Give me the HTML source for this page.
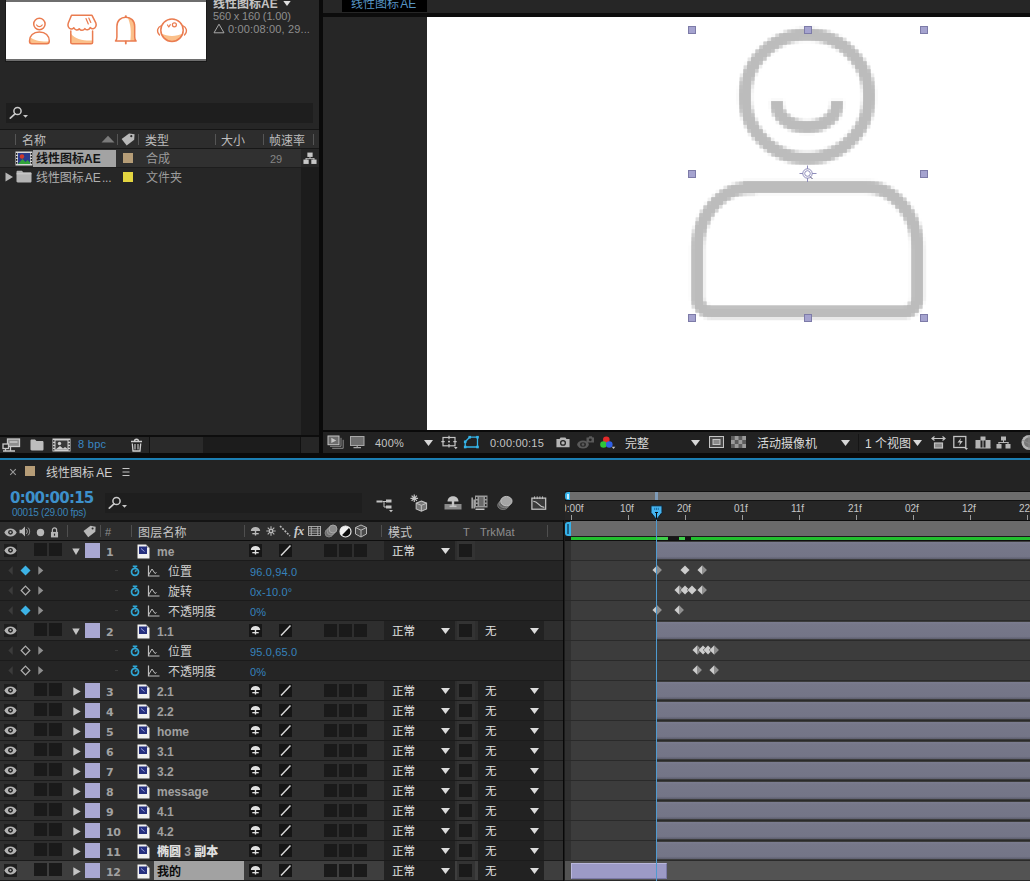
<!DOCTYPE html>
<html lang="zh"><head><meta charset="utf-8"><title>线性图标 AE</title><style>
html,body{margin:0;padding:0;background:#232323;}
body{width:1030px;height:881px;overflow:hidden;position:relative;font-family:"Liberation Sans","Noto Sans CJK SC",sans-serif;}
div,span,svg{position:absolute;display:block;box-sizing:border-box;}
span{white-space:nowrap;}
</style></head><body>
<div style="left:0px;top:0px;width:319px;height:455px;background:#262626;"></div>
<div style="left:5px;top:0px;width:202px;height:62px;background:#1a1a1a;"></div>
<div style="left:6px;top:0px;width:200px;height:2px;background:#6e6e6e;"></div>
<div style="left:6px;top:2px;width:200px;height:57px;background:#ffffff;"></div>
<div style="left:6px;top:59px;width:200px;height:2px;background:#6e6e6e;"></div>
<svg style="left:6px;top:2px" width="200" height="57" viewBox="0 0 200 57">
<g fill="#fbc08a" stroke="none">
<path d="M24 35c3.500 3.500 12 5 19.300 4.500-0.300 1.800-1.200 2.300-2.300 2.300h-15c-1.600 0-2.600-1-2.500-3.500z"/>
<path d="M64.800 31.500c4 5.500 13 7.500 21.800 7v2c0 0.800-0.600 1.200-1.500 1.200h-18.800c-0.900 0-1.500-0.400-1.500-1.200z"/>
<path d="M121.500 15.300c5 0.800 7.200 4 7.200 9.200v10.500c0 2 0.400 3 1.400 4h-5.800c1-8 0.700-17-2.800-23.700z"/>
<path d="M155.500 31.500c5.500 3.200 15.500 3.200 21 0-1 4.800-5.800 8-10.500 8-4.500 0-9.300-3-10.500-8z"/>
</g>
<g fill="none" stroke="#ea7c50" stroke-width="1.500" stroke-linecap="round" stroke-linejoin="round">
<circle cx="33.400" cy="22" r="5.700"/><path d="M30.600 23c1.400 2.200 4.200 2.200 5.600 0" stroke-width="1.200"/>
<path d="M23.500 39c0-5.300 3.800-9 9.900-9s9.900 3.700 9.900 9c0 1.800-0.900 2.800-2.400 2.800h-15c-1.500 0-2.400-1-2.400-2.800z"/>
<path d="M64.800 29v11.500c0 0.800 0.600 1.300 1.500 1.300h18.800c0.900 0 1.500-0.500 1.500-1.300v-11.500"/>
<path d="M65.500 13.300h20.500l3.800 7.500c1 2.600-0.200 5.400-2.600 6-1.300 0.300-2.300-0.400-3-1.200-1.200 2.600-3.800 3-5.300 1-1.500 2.300-4.200 2.300-5.700 0.200-1.500 2-4.100 1.600-5.300-1-0.700 0.800-1.700 1.500-3 1.200-2.400-0.600-3.600-3.400-2.600-6z"/>
<path d="M80 16.500l2.300 5.500M82.800 16l2 4.500" stroke-width="1.200"/>
<path d="M109.500 39c1-1 1.400-2 1.400-4v-10.500c0-6 3.900-9.300 8.900-9.300s8.900 3.300 8.900 9.300v10.500c0 2 0.400 3 1.400 4z"/><path d="M119.800 39.500v2" stroke-width="1.800"/><circle cx="119.800" cy="14.300" r="1.100" fill="#ea7c50" stroke="none"/>
<circle cx="166" cy="28.200" r="11.200"/>
<path d="M155.500 23.500c-4 1.500-5.500 6-2 9.500M176.500 23.500c4 1.500 5.500 6 2 9.500" stroke-width="1.300"/>
<circle cx="168.400" cy="22.800" r="2" stroke-width="1.200"/><path d="M161.500 23l1.300 2 1.500-2.300" stroke-width="1.200"/>
</g></svg>
<span style="left:213px;top:-4px;font-size:12px;line-height:16px;color:#c4c4c4;font-weight:bold;">线性图标AE</span>
<svg style="left:283px;top:1px" width="8" height="5" viewBox="0 0 8 5"><path d="M0.300 0h7.400l-3.700 5z" fill="#dedede"/></svg>
<span style="left:213px;top:8px;font-size:11px;line-height:16px;color:#8e8e8e;letter-spacing:-0.15px;">560 x 160 (1.00)</span>
<svg style="left:213px;top:23px" width="12" height="11" viewBox="0 0 12 11"><path d="M6 1.200L11 9.800H1z" fill="none" stroke="#a8a8a8" stroke-width="1"/></svg>
<span style="left:228px;top:21px;font-size:11px;line-height:16px;color:#8e8e8e;letter-spacing:0.15px;">0:00:08:00, 29...</span>
<div style="left:6px;top:103px;width:307px;height:20px;background:#1e1e1e;"></div>
<svg style="left:9px;top:105px" width="22" height="16" viewBox="0 0 22 16"><circle cx="8.500" cy="6" r="3.600" fill="none" stroke="#c9c9c9" stroke-width="1.500"/><path d="M6 8.800L1.300 13.200" stroke="#c9c9c9" stroke-width="1.700" stroke-linecap="round"/><path d="M14 10h5l-2.500 2.800z" fill="#c9c9c9"/></svg>
<div style="left:0px;top:129px;width:319px;height:1px;background:#151515;"></div>
<div style="left:0px;top:130px;width:319px;height:18px;background:#2d2d2d;"></div>
<div style="left:0px;top:148px;width:319px;height:1px;background:#171717;"></div>
<div style="left:15px;top:134px;width:1px;height:11px;background:#555555;"></div>
<div style="left:117px;top:134px;width:1px;height:11px;background:#555555;"></div>
<div style="left:138px;top:134px;width:1px;height:11px;background:#555555;"></div>
<div style="left:215px;top:134px;width:1px;height:11px;background:#555555;"></div>
<div style="left:263px;top:134px;width:1px;height:11px;background:#555555;"></div>
<div style="left:313px;top:134px;width:1px;height:11px;background:#555555;"></div>
<span style="left:22px;top:132px;font-size:12px;line-height:18px;color:#bdbdbd;">名称</span>
<svg style="left:101px;top:135px" width="14" height="8" viewBox="0 0 14 8"><path d="M0.500 7.500L7 0.800l6.500 6.700z" fill="#7b7b7b"/></svg>
<svg style="left:120px;top:132px" width="16" height="15" viewBox="0 0 16 15"><path d="M8.200 1.300l5.600 0.200 0.400 5.500-6.700 6.700-5.900-5.800z" fill="#b9b9b9" transform="rotate(8 8 7.500)"/><circle cx="11.300" cy="4.200" r="1.100" fill="#2b2b2b"/></svg>
<span style="left:145px;top:132px;font-size:12px;line-height:18px;color:#bdbdbd;">类型</span>
<span style="left:221px;top:132px;font-size:12px;line-height:18px;color:#bdbdbd;">大小</span>
<span style="left:269px;top:132px;font-size:12px;line-height:18px;color:#bdbdbd;">帧速率</span>
<div style="left:0px;top:149px;width:301px;height:18px;background:#303030;"></div>
<div style="left:301px;top:149px;width:18px;height:18px;background:#262626;"></div>
<svg style="left:15px;top:151px" width="18" height="15" viewBox="0 0 18 15">
<rect x="0.500" y="0.500" width="17" height="14" fill="#d9d9d9"/><rect x="3" y="2" width="12" height="11" fill="#2a3b8c"/>
<circle cx="7" cy="5.500" r="2.200" fill="#d23a2a"/><path d="M3 13l4.500-5 3 3 2-2 2.500 2.500v1.500z" fill="#31a33b"/>
<g fill="#1c1c1c"><rect x="1" y="2" width="1.300" height="1.800"/><rect x="1" y="5" width="1.300" height="1.800"/><rect x="1" y="8" width="1.300" height="1.800"/><rect x="1" y="11" width="1.300" height="1.800"/><rect x="15.700" y="2" width="1.300" height="1.800"/><rect x="15.700" y="5" width="1.300" height="1.800"/><rect x="15.700" y="8" width="1.300" height="1.800"/><rect x="15.700" y="11" width="1.300" height="1.800"/></g></svg>
<div style="left:33px;top:150px;width:83px;height:17px;background:#a3a3a3;"></div>
<span style="left:36px;top:150px;font-size:12px;line-height:18px;color:#151515;font-weight:bold;">线性图标AE</span>
<div style="left:123px;top:153px;width:10px;height:10px;background:#b69d77;"></div>
<span style="left:146px;top:150px;font-size:12px;line-height:18px;color:#9b9b9b;">合成</span>
<span style="left:270px;top:150px;font-size:11px;line-height:18px;color:#858585;">29</span>
<svg style="left:303px;top:152px" width="14" height="12.500" viewBox="0 0 16 14"><g fill="#c7c7c7"><rect x="5" y="0.500" width="6" height="5"/><rect x="0.500" y="8.500" width="6" height="5"/><rect x="9.500" y="8.500" width="6" height="5"/><rect x="7.500" y="5" width="1" height="2.500"/><rect x="3" y="7" width="10" height="1"/><rect x="3" y="7" width="1" height="2"/><rect x="12" y="7" width="1" height="2"/></g></svg>
<div style="left:0px;top:167px;width:301px;height:1px;background:#1d1d1d;"></div>
<div style="left:0px;top:168px;width:301px;height:19px;background:#262626;"></div>
<svg style="left:5px;top:172px" width="9" height="10" viewBox="0 0 9 10"><path d="M0.500 0.500l7.500 4.500-7.500 4.500z" fill="#b5b5b5"/></svg>
<svg style="left:16px;top:170px" width="16" height="13" viewBox="0 0 16 13"><path d="M0.500 2c0-0.800 0.500-1.300 1.300-1.300h4l1.500 1.600h7c0.800 0 1.200 0.500 1.200 1.200v7.800c0 0.800-0.500 1.200-1.200 1.200h-12.500c-0.800 0-1.300-0.500-1.300-1.200z" fill="#b4b4b4"/><path d="M0.500 3.800h15" stroke="#d4d4d4" stroke-width="0.800"/></svg>
<span style="left:36px;top:169px;font-size:12px;line-height:18px;color:#b0b0b0;word-spacing:-2px;letter-spacing:-0.1px;">线性图标 AE ...</span>
<div style="left:123px;top:172px;width:10px;height:10px;background:#e3d540;"></div>
<span style="left:146px;top:169px;font-size:12px;line-height:18px;color:#9b9b9b;">文件夹</span>
<div style="left:301px;top:167px;width:18px;height:268px;background:#1c1c1c;"></div>
<div style="left:0px;top:435px;width:319px;height:2px;background:#0d0d0d;"></div>
<div style="left:0px;top:437px;width:319px;height:16px;background:#262626;"></div>
<div style="left:149px;top:437px;width:1px;height:16px;background:#111;"></div>
<div style="left:150px;top:437px;width:53px;height:16px;background:#2a2a2a;"></div>
<div style="left:203px;top:437px;width:97px;height:16px;background:#1c1c1c;"></div>
<div style="left:300px;top:437px;width:1px;height:16px;background:#111;"></div>
<svg style="left:2px;top:438px" width="19" height="14" viewBox="0 0 19 14"><g fill="none" stroke="#c9c9c9" stroke-width="1.300"><rect x="5.500" y="1" width="12" height="7.500" fill="#8d8d8d"/><path d="M7.500 4h8" stroke-width="1.500"/><rect x="1" y="6" width="5.500" height="4.500" fill="#262626"/><path d="M8.500 8.500v4.500M3.500 10.500v2.500M1 13h12"/></g></svg>
<svg style="left:30px;top:439px" width="14" height="12" viewBox="0 0 14 12"><path d="M0.500 1.800c0-0.800 0.500-1.300 1.300-1.300h3.200l1.500 1.600h5.700c0.800 0 1.300 0.500 1.300 1.200v7c0 0.800-0.500 1.200-1.300 1.200h-10.400c-0.800 0-1.300-0.500-1.300-1.200z" fill="#bdbdbd"/></svg>
<svg style="left:52px;top:438px" width="19" height="14" viewBox="0 0 19 14"><rect x="0.500" y="0.500" width="18" height="13" fill="#cfcfcf"/><rect x="3.500" y="2.500" width="12" height="9" fill="#3a3a3a"/><circle cx="7.500" cy="5.500" r="1.700" fill="#cfcfcf"/><path d="M3.500 11.500l4.500-3.500 3 2.500 2-1.500 2.500 1.800v0.700z" fill="#cfcfcf"/>
<g fill="#2a2a2a"><rect x="1.200" y="2" width="1.200" height="1.800"/><rect x="1.200" y="5" width="1.200" height="1.800"/><rect x="1.200" y="8" width="1.200" height="1.800"/><rect x="1.200" y="11" width="1.200" height="1.500"/><rect x="16.600" y="2" width="1.200" height="1.800"/><rect x="16.600" y="5" width="1.200" height="1.800"/><rect x="16.600" y="8" width="1.200" height="1.800"/><rect x="16.600" y="11" width="1.200" height="1.500"/></g></svg>
<span style="left:78px;top:436px;font-size:11px;line-height:17px;color:#3a86c4;letter-spacing:0.3px;">8 bpc</span>
<svg style="left:130px;top:438px" width="13" height="14" viewBox="0 0 13 14"><g fill="none" stroke="#cfcfcf" stroke-width="1.300"><path d="M1 3.500h11M4.500 3.200c0-2.600 4-2.600 4 0"/><path d="M2.300 5.500l0.700 7.500h7l0.700-7.500"/><path d="M5 6v5.500M8 6v5.500" stroke-width="1.100"/></g></svg>
<div style="left:319px;top:0px;width:4px;height:458px;background:#0a0a0a;"></div>
<div style="left:323px;top:0px;width:707px;height:13px;background:#262626;"></div>
<div style="left:342px;top:0px;width:85px;height:12px;background:#000000;"></div>
<span style="left:351px;top:-5px;font-size:12px;line-height:18px;color:#5794c4;word-spacing:-2px;">线性图标 AE</span>
<div style="left:323px;top:13px;width:707px;height:4px;background:#0c0c0c;"></div>
<div style="left:323px;top:17px;width:104px;height:413px;background:#262626;"></div>
<div style="left:427px;top:17px;width:603px;height:413px;background:#ffffff;"></div>
<svg style="left:427px;top:17px" width="603" height="413" viewBox="427 17 603 413">
<defs><filter id="soft" filterUnits="userSpaceOnUse" x="427" y="17" width="603" height="413">
<feGaussianBlur in="SourceGraphic" stdDeviation="1.3" result="b"/>
<feFlood x="692" y="182" width="2" height="2" flood-color="#000"/>
<feComposite x="691" y="181" width="4" height="4" operator="over"/>
<feTile result="grid"/>
<feComposite in="b" in2="grid" operator="in"/>
<feMorphology operator="dilate" radius="1"/>
</filter></defs>
<g fill="none" stroke="#bcbcbc" stroke-width="12" filter="url(#soft)">
<circle cx="807" cy="96.500" r="62"/>
<path d="M777 101v3.500a30 22.500 0 0 0 60 0v-3.500"/>
<path d="M749.500 187h116a52 62 0 0 1 52 62v49a14 14 0 0 1 -14 14h-192a14 14 0 0 1 -14 -14v-48a52 62 0 0 1 52 -62z"/>
</g>
<g fill="#a5a3cf" stroke="#7d7ba8" stroke-width="1">
<rect x="688.500" y="26.500" width="7" height="7"/><rect x="804.500" y="26.500" width="7" height="7"/><rect x="920.500" y="26.500" width="7" height="7"/>
<rect x="688.500" y="170.500" width="7" height="7"/><rect x="920.500" y="170.500" width="7" height="7"/>
<rect x="688.500" y="314.500" width="7" height="7"/><rect x="804.500" y="314.500" width="7" height="7"/><rect x="920.500" y="314.500" width="7" height="7"/>
</g>
<g fill="none" stroke="#8f8dbb" stroke-width="1">
<circle cx="807.500" cy="173.500" r="4.700" fill="#fff"/><circle cx="807.500" cy="173.500" r="2.800"/>
<path d="M807.500 165.500v3.500M807.500 178v4M799.500 173.500h3.500M812 173.500h4.500"/><path d="M810 176.500l2.500 2.500" stroke="#55537a"/>
</g>
</svg>
<div style="left:323px;top:430px;width:707px;height:2px;background:#0a0a0a;"></div>
<div style="left:323px;top:432px;width:707px;height:21px;background:#222222;"></div>
<div style="left:0px;top:453px;width:1030px;height:5px;background:#0a0a0a;"></div>
<div style="left:0px;top:458px;width:1030px;height:2px;background:#1b7eb2;"></div>
<svg style="left:327px;top:435px" width="17" height="15" viewBox="0 0 17 15"><g fill="none" stroke="#8c8c8c" stroke-width="1"><path d="M3 11.300h11v-8.500M5.200 13.300h11v-8.500"/></g><rect x="1" y="1" width="11" height="8.700" fill="#6c6c6c" stroke="#c4c4c4" stroke-width="1"/><path d="M4.300 2.800l5 2.600-5 2.600z" fill="#c4c4c4"/></svg>
<svg style="left:350px;top:436px" width="15" height="13" viewBox="0 0 15 13"><rect x="0.500" y="0.500" width="13.500" height="9" fill="#6e6e6e" stroke="#a8a8a8" stroke-width="1"/><path d="M7.200 9.500v2M3.500 11.700h7.500" stroke="#a8a8a8" stroke-width="1.200"/></svg>
<span style="left:375px;top:434px;font-size:11px;line-height:18px;color:#c4c4c4;letter-spacing:0.2px;">400%</span>
<svg style="left:424px;top:440px" width="9" height="6" viewBox="0 0 9 6"><path d="M0 0h9l-4.5 6z" fill="#d8d8d8"/></svg>
<svg style="left:441px;top:435px" width="17" height="15" viewBox="0 0 17 15"><g fill="none" stroke="#c4c4c4" stroke-width="1.200"><rect x="2" y="2.500" width="12" height="8.300"/><path d="M8 0.800v3.400M8 9v3.400M0.300 6.600h3.400M12.300 6.600h3.400"/><path d="M8 5.600v2M7 6.600h2" stroke-width="1"/></g><path d="M13 12h3.600l-1.800 2.300z" fill="#c4c4c4"/></svg>
<svg style="left:463px;top:435px" width="17" height="14" viewBox="0 0 17 14"><path d="M2.200 6.800l4.500-4.600h7.800v9.800h-12.300z" fill="none" stroke="#35b5ea" stroke-width="1.300"/><g fill="#35b5ea"><rect x="0.900" y="5.500" width="2.600" height="2.600"/><rect x="5.400" y="0.900" width="2.600" height="2.600"/><rect x="13.200" y="0.900" width="2.600" height="2.600"/><rect x="13.200" y="10.700" width="2.600" height="2.600"/><rect x="0.900" y="10.700" width="2.600" height="2.600"/></g></svg>
<span style="left:490px;top:434px;font-size:11px;line-height:18px;color:#c4c4c4;letter-spacing:0.2px;">0:00:00:15</span>
<svg style="left:556px;top:437px" width="14" height="11" viewBox="0 0 16 13" preserveAspectRatio="none"><path d="M0.500 2.500h3.500l1.200-2h5.600l1.200 2h3.500v9.500h-15z" fill="#b5b5b5"/><circle cx="8" cy="7" r="3.400" fill="#222"/><circle cx="8" cy="7" r="2" fill="#b5b5b5"/></svg>
<svg style="left:576px;top:435px" width="19" height="15" viewBox="0 0 19 15"><ellipse cx="7" cy="9.500" rx="5.800" ry="4" fill="#5a5a5a"/><ellipse cx="7" cy="9.500" rx="3" ry="2.300" fill="#2c2c2c"/><circle cx="7" cy="9.500" r="1.300" fill="#5a5a5a"/><path d="M10.500 2.500h2l0.800-1.300h2.500l0.800 1.300h1.400v5h-7.500z" fill="#5a5a5a"/><circle cx="14.300" cy="4.800" r="1.400" fill="#222"/></svg>
<svg style="left:599px;top:435px" width="18" height="15" viewBox="0 0 18 15"><circle cx="7.300" cy="4.700" r="3.300" fill="#e42a2a"/><circle cx="4.500" cy="9.500" r="3.300" fill="#2fc43a"/><circle cx="10.300" cy="9.500" r="3.300" fill="#3060e8"/><path d="M12.700 11.800h3.600l-1.800 2.300z" fill="#c4c4c4"/></svg>
<span style="left:625px;top:435px;font-size:12px;line-height:18px;color:#dcdcdc;">完整</span>
<svg style="left:691px;top:440px" width="9" height="6" viewBox="0 0 9 6"><path d="M0 0h9l-4.5 6z" fill="#d8d8d8"/></svg>
<svg style="left:709px;top:435px" width="15" height="14" viewBox="0 0 15 14"><rect x="0.500" y="1.500" width="14" height="11" fill="#4a4a4a" stroke="#c4c4c4" stroke-width="1"/><rect x="4" y="4.500" width="7" height="5" fill="#8a8a8a" stroke="#c4c4c4" stroke-width="1"/></svg>
<svg style="left:731px;top:436px" width="15" height="12" viewBox="0 0 15 12"><rect width="15" height="12" fill="#9a9a9a"/><g fill="#5c5c5c"><rect x="0" y="0" width="3.750" height="4"/><rect x="7.500" y="0" width="3.750" height="4"/><rect x="3.750" y="4" width="3.750" height="4"/><rect x="11.250" y="4" width="3.750" height="4"/><rect x="0" y="8" width="3.750" height="4"/><rect x="7.500" y="8" width="3.750" height="4"/></g></svg>
<span style="left:757px;top:435px;font-size:12px;line-height:18px;color:#dcdcdc;">活动摄像机</span>
<svg style="left:841px;top:440px" width="9" height="6" viewBox="0 0 9 6"><path d="M0 0h9l-4.5 6z" fill="#d8d8d8"/></svg>
<div style="left:858px;top:434px;width:1px;height:17px;background:#151515;"></div>
<span style="left:865px;top:435px;font-size:12px;line-height:18px;color:#dcdcdc;">1 个视图</span>
<svg style="left:913px;top:440px" width="9" height="6" viewBox="0 0 9 6"><path d="M0 0h9l-4.5 6z" fill="#d8d8d8"/></svg>
<svg style="left:931px;top:436px" width="15" height="13" viewBox="0 0 15 13"><g fill="none" stroke="#c4c4c4" stroke-width="1.200"><path d="M1 2.500h13M3.500 0.500l-2.500 2 2.500 2M11.500 0.500l2.500 2-2.500 2"/><rect x="3.500" y="7" width="8" height="5" fill="#8a8a8a"/></g></svg>
<svg style="left:953px;top:435px" width="15" height="15" viewBox="0 0 15 15"><rect x="0.800" y="1.500" width="12" height="11" fill="none" stroke="#c4c4c4" stroke-width="1.300"/><path d="M8 3l-3.500 4.500h2.500l-1 3.500 3.800-5h-2.500z" fill="#c4c4c4"/><path d="M11.500 13h3.500l-1.750 2z" fill="#c4c4c4"/></svg>
<svg style="left:975px;top:436px" width="16" height="13" viewBox="0 0 16 13"><g fill="#b5b5b5"><rect x="0.500" y="4" width="5" height="8"/><rect x="10.500" y="4" width="5" height="8"/><rect x="5.500" y="0.500" width="5" height="4"/><rect x="7.500" y="4" width="1" height="8"/><rect x="0.500" y="11.500" width="15" height="1"/></g></svg>
<svg style="left:996px;top:436px" width="15" height="13" viewBox="0 0 15 13"><g fill="#b5b5b5"><rect x="5" y="0.500" width="5" height="4"/><rect x="0.500" y="8" width="5" height="4.500"/><rect x="9.500" y="8" width="5" height="4.500"/><rect x="7" y="4" width="1" height="2.500"/><rect x="2.500" y="6" width="10" height="1"/><rect x="2.500" y="6" width="1" height="2"/><rect x="11.500" y="6" width="1" height="2"/></g></svg>
<svg style="left:1020px;top:434px" width="10" height="17" viewBox="0 0 10 17"><circle cx="9" cy="8.500" r="7.500" fill="#b5b5b5"/><circle cx="9" cy="8.500" r="5" fill="#777"/><path d="M9 1v15M2 6l12 6" stroke="#8a8a8a" stroke-width="1"/></svg>
<div style="left:0px;top:460px;width:1030px;height:421px;background:#232323;"></div>
<svg style="left:9px;top:468px" width="8" height="8" viewBox="0 0 8 8"><path d="M1.200 1.200l5.600 5.600M6.800 1.200l-5.600 5.600" stroke="#9a9a9a" stroke-width="1.100"/></svg>
<div style="left:25px;top:466px;width:10px;height:10px;background:#b69d77;"></div>
<span style="left:46px;top:464px;font-size:12px;line-height:18px;color:#cfcfcf;word-spacing:-1px;">线性图标 AE</span>
<svg style="left:122px;top:467px" width="8" height="10" viewBox="0 0 8 10"><path d="M0.500 1.500h7M0.500 5h7M0.500 8.500h7" stroke="#c4c4c4" stroke-width="1.200"/></svg>
<span style="left:10px;top:487px;font-size:15px;line-height:22px;color:#3d90cb;font-weight:bold;font-family:'DejaVu Sans','Liberation Sans',sans-serif;letter-spacing:-0.75px;">0:00:00:15</span>
<span style="left:12px;top:505px;font-size:10px;line-height:16px;color:#3a83b8;letter-spacing:-0.25px;">00015 (29.00 fps)</span>
<div style="left:105px;top:493px;width:257px;height:20px;background:#1e1e1e;"></div>
<svg style="left:108px;top:495px" width="22" height="16" viewBox="0 0 22 16"><circle cx="8.500" cy="6" r="3.600" fill="none" stroke="#c9c9c9" stroke-width="1.500"/><path d="M6 8.800L1.300 13.200" stroke="#c9c9c9" stroke-width="1.700" stroke-linecap="round"/><path d="M14 10h5l-2.500 2.800z" fill="#c9c9c9"/></svg>
<svg style="left:376px;top:497px" width="18" height="16" viewBox="0 0 18 16"><g fill="#c4c4c4"><rect x="0.500" y="3.500" width="6" height="2"/><rect x="10" y="2.500" width="5.500" height="3"/><rect x="10" y="8.500" width="5.500" height="3"/></g><path d="M6.500 4.500h3.500M8 4.500v5.500h2" fill="none" stroke="#c4c4c4" stroke-width="1"/><path d="M13 13h4l-2 2.300z" fill="#c4c4c4"/></svg>
<svg style="left:410px;top:494px" width="18" height="18" viewBox="0 0 19 19"><g stroke="#c4c4c4" stroke-width="1.300"><path d="M4.500 0.500v8M0.500 4.500h8M1.700 1.700l5.600 5.600M7.300 1.700l-5.600 5.600"/></g><path d="M12 7.500l5.500 2.200v6l-5.500 2.500-5.500-2.500v-6z" fill="#777" stroke="#c4c4c4" stroke-width="1.100"/><path d="M6.500 9.700l5.500 2.300 5.500-2.300M12 12v6" fill="none" stroke="#c4c4c4" stroke-width="1"/></svg>
<svg style="left:444px;top:495px" width="18" height="15" viewBox="0 0 18 15"><rect x="0.500" y="9" width="17" height="5.500" fill="#8a8a8a"/><path d="M3.500 6.500c0-7 11-7 11 0z" fill="#c4c4c4"/><rect x="7.800" y="6" width="2.400" height="5" fill="#c4c4c4"/><rect x="5.500" y="10.500" width="7" height="1.600" fill="#c4c4c4"/></svg>
<svg style="left:471px;top:495px" width="17" height="16" viewBox="0 0 17 16"><rect x="4" y="0.500" width="12.500" height="12" fill="#9a9a9a"/><g fill="#2a2a2a"><rect x="5" y="2" width="1.500" height="2"/><rect x="5" y="5.500" width="1.500" height="2"/><rect x="5" y="9" width="1.500" height="2"/><rect x="14" y="2" width="1.500" height="2"/><rect x="14" y="5.500" width="1.500" height="2"/><rect x="14" y="9" width="1.500" height="2"/></g><rect x="8" y="2" width="4.500" height="9" fill="#6a6a6a"/><g fill="#c4c4c4"><rect x="0.500" y="2.500" width="1.300" height="11"/><rect x="2.500" y="4.500" width="1.300" height="9"/><rect x="4.500" y="13.500" width="9" height="1.500"/></g></svg>
<svg style="left:497px;top:495px" width="16" height="16" viewBox="0 0 17 17"><ellipse cx="6.500" cy="11" rx="5.800" ry="4.500" fill="#555" stroke="#777" stroke-width="1"/><ellipse cx="8" cy="9" rx="5.800" ry="4.500" fill="#6a6a6a" stroke="#888" stroke-width="1"/><ellipse cx="10" cy="6.500" rx="6" ry="5" fill="#a5a5a5" stroke="#c4c4c4" stroke-width="1"/></svg>
<svg style="left:531px;top:495px" width="16" height="16" viewBox="0 0 18 17"><rect x="1" y="3" width="15.500" height="12.500" fill="#3a3a3a" stroke="#c4c4c4" stroke-width="1.400"/><path d="M4 1v3M7 1v3M10 1v3M13 1v3" stroke="#c4c4c4" stroke-width="1"/><path d="M2.500 6.500c6 0 6 7 12.500 7" fill="none" stroke="#c4c4c4" stroke-width="1.300"/></svg>
<div style="left:0px;top:520px;width:563px;height:2px;background:#141414;"></div>
<div style="left:0px;top:522px;width:563px;height:18px;background:#2d2d2d;"></div>
<div style="left:0px;top:540px;width:1030px;height:1px;background:#0e0e0e;"></div>
<div style="left:67px;top:525px;width:1px;height:12px;background:#4f4f4f;"></div>
<div style="left:100px;top:525px;width:1px;height:12px;background:#4f4f4f;"></div>
<div style="left:131px;top:525px;width:1px;height:12px;background:#4f4f4f;"></div>
<div style="left:244px;top:525px;width:1px;height:12px;background:#4f4f4f;"></div>
<div style="left:381px;top:525px;width:1px;height:12px;background:#4f4f4f;"></div>
<div style="left:547px;top:525px;width:1px;height:12px;background:#4f4f4f;"></div>
<svg style="left:4px;top:528px" width="13" height="9" viewBox="0 0 13 9"><path d="M0.300 4.500c2.400-5.300 10-5.300 12.400 0-2.400 5.300-10 5.300-12.400 0z" fill="#b4b4b4"/><circle cx="6.500" cy="4.300" r="2.400" fill="#2b2b2b"/><circle cx="6.500" cy="4.300" r="1" fill="#b4b4b4"/></svg>
<svg style="left:19px;top:526px" width="12" height="11" viewBox="0 0 13 12"><path d="M0.500 4h2.500l3.500-3.500v11l-3.500-3.500h-2.500z" fill="#b8b8b8"/><path d="M8 3.500c1.300 1.300 1.300 3.700 0 5M9.800 1.800c2.300 2.300 2.300 6.100 0 8.400" fill="none" stroke="#b8b8b8" stroke-width="1"/></svg>
<svg style="left:36px;top:528px" width="9" height="9" viewBox="0 0 9 9"><circle cx="4.500" cy="4.500" r="3.700" fill="#b8b8b8"/></svg>
<svg style="left:50px;top:527px" width="9" height="11" viewBox="0 0 10 13"><path d="M2.500 6v-2.500c0-3.300 5-3.300 5 0v2.500" fill="none" stroke="#b8b8b8" stroke-width="1.400"/><rect x="0.800" y="5.800" width="8.400" height="6.500" fill="#b8b8b8"/><rect x="4.300" y="7.800" width="1.400" height="2.500" fill="#2b2b2b"/></svg>
<svg style="left:82px;top:524px" width="15" height="15" viewBox="0 0 16 15"><path d="M8.200 1.300l5.600 0.200 0.400 5.500-6.700 6.700-5.900-5.800z" fill="#b8b8b8" transform="rotate(8 8 7.500)"/><circle cx="11.300" cy="4.200" r="1.100" fill="#2b2b2b"/></svg>
<span style="left:105px;top:523px;font-size:11px;line-height:18px;color:#8f8f8f;">#</span>
<span style="left:138px;top:524px;font-size:12px;line-height:18px;color:#c6c6c6;letter-spacing:0.2px;">图层名称</span>
<svg style="left:249px;top:525px" width="13" height="13" viewBox="0 0 13 13"><path d="M1.800 6c0-5.300 9.400-5.300 9.400 0z" fill="#b8b8b8"/><rect x="5.800" y="5.500" width="1.400" height="5" fill="#b8b8b8"/><rect x="3.300" y="8" width="6.400" height="1.300" fill="#b8b8b8"/></svg>
<svg style="left:266px;top:526px" width="10" height="10" viewBox="0 0 10 10"><g stroke="#b8b8b8" stroke-width="1.100"><path d="M5 0.300v9.400M0.300 5h9.400M1.700 1.700l6.600 6.600M8.300 1.700l-6.600 6.600"/></g><circle cx="5" cy="5" r="2.300" fill="#b8b8b8"/><circle cx="5" cy="5" r="1" fill="#2b2b2b"/></svg>
<svg style="left:279px;top:525px" width="12" height="12" viewBox="0 0 12 12"><path d="M1 1l10 10" stroke="#b8b8b8" stroke-width="1.600" stroke-dasharray="2 1.300"/></svg>
<span style="left:294px;top:521px;font-size:13px;line-height:20px;color:#c9c9c9;font-style:italic;font-weight:bold;font-family:'Liberation Serif',serif;letter-spacing:-0.5px;">fx</span>
<svg style="left:308px;top:526px" width="13" height="10" viewBox="0 0 14 12" preserveAspectRatio="none"><rect x="0.500" y="0.500" width="13" height="11" fill="none" stroke="#b8b8b8" stroke-width="1"/><path d="M3.500 0.500v11M10.500 0.500v11M3.500 3.300h7M3.500 6h7M3.500 8.700h7" stroke="#b8b8b8" stroke-width="1"/><path d="M0.500 3.300h3M0.500 6h3M0.500 8.700h3M10.500 3.300h3M10.500 6h3M10.500 8.700h3" stroke="#b8b8b8" stroke-width="0.800"/></svg>
<svg style="left:324px;top:524px" width="14" height="14" viewBox="0 0 14 14"><circle cx="5" cy="9" r="4" fill="#6e6e6e" stroke="#8c8c8c" stroke-width="0.800"/><circle cx="7" cy="7" r="4" fill="#7d7d7d" stroke="#9a9a9a" stroke-width="0.800"/><circle cx="9" cy="5" r="4" fill="#8a8a8a" stroke="#b0b0b0" stroke-width="0.800"/></svg>
<svg style="left:339px;top:525px" width="13" height="13" viewBox="0 0 13 13"><circle cx="6.500" cy="6.500" r="5.500" fill="#0d0d0d" stroke="#e8e8e8" stroke-width="1.200"/><path d="M2.600 10.400a5.500 5.500 0 0 1 7.800-7.800z" fill="#f0f0f0"/></svg>
<svg style="left:354px;top:524px" width="14" height="14" viewBox="0 0 14 14"><path d="M7 1l5.500 2.500v6.500l-5.500 3-5.500-3v-6.500z" fill="#4a4a4a" stroke="#b8b8b8" stroke-width="1"/><path d="M1.500 3.500l5.500 2.700 5.500-2.700M7 6.200v6.800" fill="none" stroke="#b8b8b8" stroke-width="1"/></svg>
<span style="left:388px;top:524px;font-size:12px;line-height:18px;color:#c6c6c6;">模式</span>
<span style="left:463px;top:523px;font-size:11px;line-height:18px;color:#8f8f8f;">T</span>
<span style="left:480px;top:523px;font-size:11px;line-height:18px;color:#8f8f8f;letter-spacing:0.15px;">TrkMat</span>
<div style="left:0px;top:541px;width:563px;height:19px;background:#2e2e2e;"></div>
<div style="left:0px;top:560px;width:563px;height:1px;background:#1b1b1b;"></div>
<div style="left:4px;top:544px;width:13px;height:13px;background:#1e1e1e;"></div>
<svg style="left:4px;top:546px" width="13" height="9" viewBox="0 0 13 9"><path d="M0.300 4.500c2.400-5.300 10-5.300 12.400 0-2.400 5.300-10 5.300-12.400 0z" fill="#b4b4b4"/><circle cx="6.500" cy="4.300" r="2.400" fill="#1e1e1e"/><circle cx="6.500" cy="4.300" r="1" fill="#b4b4b4"/></svg>
<div style="left:34px;top:543px;width:13px;height:13px;background:#1a1a1a;"></div>
<div style="left:49px;top:543px;width:13px;height:13px;background:#1a1a1a;"></div>
<svg style="left:72px;top:548px" width="8" height="7.500" viewBox="0 0 9 8"><path d="M0.300 0.300h8.400l-4.200 7.400z" fill="#c4c4c4"/></svg>
<div style="left:85px;top:543px;width:15px;height:15px;background:#a9a8d2;"></div>
<span style="left:106px;top:543px;font-size:11px;line-height:19px;color:#a2a2a2;font-weight:bold;font-family:'DejaVu Sans','Liberation Sans',sans-serif;letter-spacing:-0.3px;">1</span>
<svg style="left:137px;top:544px" width="13" height="15" viewBox="0 0 13 15"><path d="M0.500 0.500h8.500l3.500 3.500v10.500h-12z" fill="#f2f2f2"/><path d="M9 0.500v3.500h3.500z" fill="#b5b5b5"/><rect x="2" y="2.500" width="8" height="7.500" fill="#26307e"/><path d="M4 4.500l3.500 3" stroke="#9aa3e0" stroke-width="1"/></svg>
<span style="left:157px;top:543px;font-size:12px;line-height:19px;color:#a0a0a0;font-weight:bold;">me</span>
<svg style="left:249px;top:544px" width="13" height="13" viewBox="0 0 13 13"><rect width="13" height="13" fill="#161616"/><path d="M1.800 6c0-5.300 9.400-5.300 9.400 0z" fill="#e0e0e0"/><rect x="5.800" y="5.500" width="1.400" height="5" fill="#e0e0e0"/><rect x="3.300" y="8" width="6.400" height="1.300" fill="#e0e0e0"/></svg>
<svg style="left:279px;top:544px" width="13" height="13" viewBox="0 0 13 13"><rect width="13" height="13" fill="#161616"/><path d="M2 11.500l9.500-10" stroke="#d8d8d8" stroke-width="1.500"/></svg>
<div style="left:324px;top:544px;width:13px;height:13px;background:#1a1a1a;"></div>
<div style="left:339px;top:544px;width:13px;height:13px;background:#1a1a1a;"></div>
<div style="left:354px;top:544px;width:13px;height:13px;background:#1a1a1a;"></div>
<div style="left:384px;top:541px;width:71px;height:19px;background:#222222;"></div>
<span style="left:392px;top:542px;font-size:11.5px;line-height:19px;color:#e2e2e2;">正常</span>
<svg style="left:441px;top:548px" width="9" height="6" viewBox="0 0 9 6"><path d="M0 0h9l-4.5 6z" fill="#dcdcdc"/></svg>
<div style="left:457px;top:541px;width:18px;height:19px;background:#333333;"></div>
<div style="left:459px;top:544px;width:13px;height:13px;background:#1a1a1a;"></div>
<div style="left:0px;top:561px;width:563px;height:19px;background:#252525;"></div>
<div style="left:0px;top:580px;width:563px;height:1px;background:#1b1b1b;"></div>
<svg style="left:8px;top:566px" width="5" height="9" viewBox="0 0 5 9"><path d="M4.700 0.300v8.400l-4.400-4.200z" fill="#3c3c3c"/></svg>
<svg style="left:20px;top:565px" width="11" height="11" viewBox="0 0 11 11"><path d="M5.500 0.500l5 5-5 5-5-5z" fill="#3db3e6"/></svg>
<svg style="left:38px;top:566px" width="6" height="9" viewBox="0 0 6 9"><path d="M0.300 0.300v8.400l5-4.200z" fill="#8e8e8e"/></svg>
<div style="left:115px;top:570px;width:3px;height:1px;background:#3a3a3a;"></div>
<svg style="left:130px;top:565px" width="10" height="12" viewBox="0 0 12 14"><circle cx="6" cy="8" r="4.200" fill="none" stroke="#2fa7d6" stroke-width="2.100"/><path d="M3.300 1.300h5.400M6 1.300v2.500M6 8l1.800-2" stroke="#2fa7d6" stroke-width="1.800" fill="none"/></svg>
<svg style="left:147px;top:565px" width="13" height="12" viewBox="0 0 13 12"><path d="M1.500 0.500v10.500h11" fill="none" stroke="#c0c0c0" stroke-width="1.200"/><path d="M1.500 10l3.500-6 3 4.500 1.500-1" fill="none" stroke="#c0c0c0" stroke-width="1"/></svg>
<span style="left:168px;top:563px;font-size:12px;line-height:19px;color:#d0d0d0;">位置</span>
<span style="left:250px;top:563px;font-size:11px;line-height:19px;color:#3583bd;letter-spacing:0.15px;">96.0,94.0</span>
<div style="left:0px;top:581px;width:563px;height:19px;background:#252525;"></div>
<div style="left:0px;top:600px;width:563px;height:1px;background:#1b1b1b;"></div>
<svg style="left:8px;top:586px" width="5" height="9" viewBox="0 0 5 9"><path d="M4.700 0.300v8.400l-4.400-4.200z" fill="#3c3c3c"/></svg>
<svg style="left:20px;top:585px" width="11" height="11" viewBox="0 0 11 11"><path d="M5.500 1.200l4.300 4.300-4.300 4.300-4.300-4.300z" fill="none" stroke="#b0b0b0" stroke-width="1.200"/></svg>
<svg style="left:38px;top:586px" width="6" height="9" viewBox="0 0 6 9"><path d="M0.300 0.300v8.400l5-4.200z" fill="#8e8e8e"/></svg>
<div style="left:115px;top:590px;width:3px;height:1px;background:#3a3a3a;"></div>
<svg style="left:130px;top:585px" width="10" height="12" viewBox="0 0 12 14"><circle cx="6" cy="8" r="4.200" fill="none" stroke="#2fa7d6" stroke-width="2.100"/><path d="M3.300 1.300h5.400M6 1.300v2.500M6 8l1.800-2" stroke="#2fa7d6" stroke-width="1.800" fill="none"/></svg>
<svg style="left:147px;top:585px" width="13" height="12" viewBox="0 0 13 12"><path d="M1.500 0.500v10.500h11" fill="none" stroke="#c0c0c0" stroke-width="1.200"/><path d="M1.500 10l3.500-6 3 4.500 1.500-1" fill="none" stroke="#c0c0c0" stroke-width="1"/></svg>
<span style="left:168px;top:583px;font-size:12px;line-height:19px;color:#d0d0d0;">旋转</span>
<span style="left:250px;top:583px;font-size:11px;line-height:19px;color:#3583bd;letter-spacing:0.15px;">0x-10.0°</span>
<div style="left:0px;top:601px;width:563px;height:19px;background:#252525;"></div>
<div style="left:0px;top:620px;width:563px;height:1px;background:#1b1b1b;"></div>
<svg style="left:8px;top:606px" width="5" height="9" viewBox="0 0 5 9"><path d="M4.700 0.300v8.400l-4.400-4.200z" fill="#3c3c3c"/></svg>
<svg style="left:20px;top:605px" width="11" height="11" viewBox="0 0 11 11"><path d="M5.500 0.500l5 5-5 5-5-5z" fill="#3db3e6"/></svg>
<svg style="left:38px;top:606px" width="6" height="9" viewBox="0 0 6 9"><path d="M0.300 0.300v8.400l5-4.200z" fill="#8e8e8e"/></svg>
<div style="left:115px;top:610px;width:3px;height:1px;background:#3a3a3a;"></div>
<svg style="left:130px;top:605px" width="10" height="12" viewBox="0 0 12 14"><circle cx="6" cy="8" r="4.200" fill="none" stroke="#2fa7d6" stroke-width="2.100"/><path d="M3.300 1.300h5.400M6 1.300v2.500M6 8l1.800-2" stroke="#2fa7d6" stroke-width="1.800" fill="none"/></svg>
<svg style="left:147px;top:605px" width="13" height="12" viewBox="0 0 13 12"><path d="M1.500 0.500v10.500h11" fill="none" stroke="#c0c0c0" stroke-width="1.200"/><path d="M1.500 10l3.500-6 3 4.500 1.500-1" fill="none" stroke="#c0c0c0" stroke-width="1"/></svg>
<span style="left:168px;top:603px;font-size:12px;line-height:19px;color:#d0d0d0;">不透明度</span>
<span style="left:250px;top:603px;font-size:11px;line-height:19px;color:#3583bd;letter-spacing:0.15px;">0%</span>
<div style="left:0px;top:621px;width:563px;height:19px;background:#2e2e2e;"></div>
<div style="left:0px;top:640px;width:563px;height:1px;background:#1b1b1b;"></div>
<div style="left:4px;top:624px;width:13px;height:13px;background:#1e1e1e;"></div>
<svg style="left:4px;top:626px" width="13" height="9" viewBox="0 0 13 9"><path d="M0.300 4.500c2.400-5.300 10-5.300 12.400 0-2.400 5.300-10 5.300-12.400 0z" fill="#b4b4b4"/><circle cx="6.500" cy="4.300" r="2.400" fill="#1e1e1e"/><circle cx="6.500" cy="4.300" r="1" fill="#b4b4b4"/></svg>
<div style="left:34px;top:623px;width:13px;height:13px;background:#1a1a1a;"></div>
<div style="left:49px;top:623px;width:13px;height:13px;background:#1a1a1a;"></div>
<svg style="left:72px;top:628px" width="8" height="7.500" viewBox="0 0 9 8"><path d="M0.300 0.300h8.400l-4.200 7.400z" fill="#c4c4c4"/></svg>
<div style="left:85px;top:623px;width:15px;height:15px;background:#a9a8d2;"></div>
<span style="left:106px;top:623px;font-size:11px;line-height:19px;color:#a2a2a2;font-weight:bold;font-family:'DejaVu Sans','Liberation Sans',sans-serif;letter-spacing:-0.3px;">2</span>
<svg style="left:137px;top:624px" width="13" height="15" viewBox="0 0 13 15"><path d="M0.500 0.500h8.500l3.500 3.500v10.500h-12z" fill="#f2f2f2"/><path d="M9 0.500v3.500h3.500z" fill="#b5b5b5"/><rect x="2" y="2.500" width="8" height="7.500" fill="#26307e"/><path d="M4 4.500l3.500 3" stroke="#9aa3e0" stroke-width="1"/></svg>
<span style="left:157px;top:623px;font-size:12px;line-height:19px;color:#a0a0a0;font-weight:bold;">1.1</span>
<svg style="left:249px;top:624px" width="13" height="13" viewBox="0 0 13 13"><rect width="13" height="13" fill="#161616"/><path d="M1.800 6c0-5.300 9.400-5.300 9.400 0z" fill="#e0e0e0"/><rect x="5.800" y="5.500" width="1.400" height="5" fill="#e0e0e0"/><rect x="3.300" y="8" width="6.400" height="1.300" fill="#e0e0e0"/></svg>
<svg style="left:279px;top:624px" width="13" height="13" viewBox="0 0 13 13"><rect width="13" height="13" fill="#161616"/><path d="M2 11.500l9.500-10" stroke="#d8d8d8" stroke-width="1.500"/></svg>
<div style="left:324px;top:624px;width:13px;height:13px;background:#1a1a1a;"></div>
<div style="left:339px;top:624px;width:13px;height:13px;background:#1a1a1a;"></div>
<div style="left:354px;top:624px;width:13px;height:13px;background:#1a1a1a;"></div>
<div style="left:384px;top:621px;width:71px;height:19px;background:#222222;"></div>
<span style="left:392px;top:622px;font-size:11.5px;line-height:19px;color:#e2e2e2;">正常</span>
<svg style="left:441px;top:628px" width="9" height="6" viewBox="0 0 9 6"><path d="M0 0h9l-4.5 6z" fill="#dcdcdc"/></svg>
<div style="left:457px;top:621px;width:18px;height:19px;background:#333333;"></div>
<div style="left:459px;top:624px;width:13px;height:13px;background:#1a1a1a;"></div>
<div style="left:478px;top:621px;width:66px;height:19px;background:#222222;"></div>
<span style="left:485px;top:622px;font-size:11.5px;line-height:19px;color:#e2e2e2;">无</span>
<svg style="left:530px;top:628px" width="9" height="6" viewBox="0 0 9 6"><path d="M0 0h9l-4.5 6z" fill="#dcdcdc"/></svg>
<div style="left:0px;top:641px;width:563px;height:19px;background:#252525;"></div>
<div style="left:0px;top:660px;width:563px;height:1px;background:#1b1b1b;"></div>
<svg style="left:8px;top:646px" width="5" height="9" viewBox="0 0 5 9"><path d="M4.700 0.300v8.400l-4.400-4.200z" fill="#3c3c3c"/></svg>
<svg style="left:20px;top:645px" width="11" height="11" viewBox="0 0 11 11"><path d="M5.500 1.200l4.300 4.300-4.300 4.300-4.300-4.300z" fill="none" stroke="#b0b0b0" stroke-width="1.200"/></svg>
<svg style="left:38px;top:646px" width="6" height="9" viewBox="0 0 6 9"><path d="M0.300 0.300v8.400l5-4.200z" fill="#8e8e8e"/></svg>
<div style="left:115px;top:650px;width:3px;height:1px;background:#3a3a3a;"></div>
<svg style="left:130px;top:645px" width="10" height="12" viewBox="0 0 12 14"><circle cx="6" cy="8" r="4.200" fill="none" stroke="#2fa7d6" stroke-width="2.100"/><path d="M3.300 1.300h5.400M6 1.300v2.500M6 8l1.800-2" stroke="#2fa7d6" stroke-width="1.800" fill="none"/></svg>
<svg style="left:147px;top:645px" width="13" height="12" viewBox="0 0 13 12"><path d="M1.500 0.500v10.500h11" fill="none" stroke="#c0c0c0" stroke-width="1.200"/><path d="M1.500 10l3.500-6 3 4.500 1.500-1" fill="none" stroke="#c0c0c0" stroke-width="1"/></svg>
<span style="left:168px;top:643px;font-size:12px;line-height:19px;color:#d0d0d0;">位置</span>
<span style="left:250px;top:643px;font-size:11px;line-height:19px;color:#3583bd;letter-spacing:0.15px;">95.0,65.0</span>
<div style="left:0px;top:661px;width:563px;height:19px;background:#252525;"></div>
<div style="left:0px;top:680px;width:563px;height:1px;background:#1b1b1b;"></div>
<svg style="left:8px;top:666px" width="5" height="9" viewBox="0 0 5 9"><path d="M4.700 0.300v8.400l-4.400-4.200z" fill="#3c3c3c"/></svg>
<svg style="left:20px;top:665px" width="11" height="11" viewBox="0 0 11 11"><path d="M5.500 1.200l4.300 4.300-4.300 4.300-4.300-4.300z" fill="none" stroke="#b0b0b0" stroke-width="1.200"/></svg>
<svg style="left:38px;top:666px" width="6" height="9" viewBox="0 0 6 9"><path d="M0.300 0.300v8.400l5-4.200z" fill="#8e8e8e"/></svg>
<div style="left:115px;top:670px;width:3px;height:1px;background:#3a3a3a;"></div>
<svg style="left:130px;top:665px" width="10" height="12" viewBox="0 0 12 14"><circle cx="6" cy="8" r="4.200" fill="none" stroke="#2fa7d6" stroke-width="2.100"/><path d="M3.300 1.300h5.400M6 1.300v2.500M6 8l1.800-2" stroke="#2fa7d6" stroke-width="1.800" fill="none"/></svg>
<svg style="left:147px;top:665px" width="13" height="12" viewBox="0 0 13 12"><path d="M1.500 0.500v10.500h11" fill="none" stroke="#c0c0c0" stroke-width="1.200"/><path d="M1.500 10l3.500-6 3 4.500 1.500-1" fill="none" stroke="#c0c0c0" stroke-width="1"/></svg>
<span style="left:168px;top:663px;font-size:12px;line-height:19px;color:#d0d0d0;">不透明度</span>
<span style="left:250px;top:663px;font-size:11px;line-height:19px;color:#3583bd;letter-spacing:0.15px;">0%</span>
<div style="left:0px;top:681px;width:563px;height:19px;background:#2e2e2e;"></div>
<div style="left:0px;top:700px;width:563px;height:1px;background:#1b1b1b;"></div>
<div style="left:4px;top:684px;width:13px;height:13px;background:#1e1e1e;"></div>
<svg style="left:4px;top:686px" width="13" height="9" viewBox="0 0 13 9"><path d="M0.300 4.500c2.400-5.300 10-5.300 12.400 0-2.400 5.300-10 5.300-12.400 0z" fill="#b4b4b4"/><circle cx="6.500" cy="4.300" r="2.400" fill="#1e1e1e"/><circle cx="6.500" cy="4.300" r="1" fill="#b4b4b4"/></svg>
<div style="left:34px;top:683px;width:13px;height:13px;background:#1a1a1a;"></div>
<div style="left:49px;top:683px;width:13px;height:13px;background:#1a1a1a;"></div>
<svg style="left:73px;top:687px" width="8" height="9" viewBox="0 0 8 9"><path d="M0.300 0.300l7.400 4.200-7.400 4.200z" fill="#c4c4c4"/></svg>
<div style="left:85px;top:683px;width:15px;height:15px;background:#a9a8d2;"></div>
<span style="left:106px;top:683px;font-size:11px;line-height:19px;color:#a2a2a2;font-weight:bold;font-family:'DejaVu Sans','Liberation Sans',sans-serif;letter-spacing:-0.3px;">3</span>
<svg style="left:137px;top:684px" width="13" height="15" viewBox="0 0 13 15"><path d="M0.500 0.500h8.500l3.500 3.500v10.500h-12z" fill="#f2f2f2"/><path d="M9 0.500v3.500h3.500z" fill="#b5b5b5"/><rect x="2" y="2.500" width="8" height="7.500" fill="#26307e"/><path d="M4 4.500l3.500 3" stroke="#9aa3e0" stroke-width="1"/></svg>
<span style="left:157px;top:683px;font-size:12px;line-height:19px;color:#a0a0a0;font-weight:bold;">2.1</span>
<svg style="left:249px;top:684px" width="13" height="13" viewBox="0 0 13 13"><rect width="13" height="13" fill="#161616"/><path d="M1.800 6c0-5.300 9.400-5.300 9.400 0z" fill="#e0e0e0"/><rect x="5.800" y="5.500" width="1.400" height="5" fill="#e0e0e0"/><rect x="3.300" y="8" width="6.400" height="1.300" fill="#e0e0e0"/></svg>
<svg style="left:279px;top:684px" width="13" height="13" viewBox="0 0 13 13"><rect width="13" height="13" fill="#161616"/><path d="M2 11.500l9.500-10" stroke="#d8d8d8" stroke-width="1.500"/></svg>
<div style="left:324px;top:684px;width:13px;height:13px;background:#1a1a1a;"></div>
<div style="left:339px;top:684px;width:13px;height:13px;background:#1a1a1a;"></div>
<div style="left:354px;top:684px;width:13px;height:13px;background:#1a1a1a;"></div>
<div style="left:384px;top:681px;width:71px;height:19px;background:#222222;"></div>
<span style="left:392px;top:682px;font-size:11.5px;line-height:19px;color:#e2e2e2;">正常</span>
<svg style="left:441px;top:688px" width="9" height="6" viewBox="0 0 9 6"><path d="M0 0h9l-4.5 6z" fill="#dcdcdc"/></svg>
<div style="left:457px;top:681px;width:18px;height:19px;background:#333333;"></div>
<div style="left:459px;top:684px;width:13px;height:13px;background:#1a1a1a;"></div>
<div style="left:478px;top:681px;width:66px;height:19px;background:#222222;"></div>
<span style="left:485px;top:682px;font-size:11.5px;line-height:19px;color:#e2e2e2;">无</span>
<svg style="left:530px;top:688px" width="9" height="6" viewBox="0 0 9 6"><path d="M0 0h9l-4.5 6z" fill="#dcdcdc"/></svg>
<div style="left:0px;top:701px;width:563px;height:19px;background:#2e2e2e;"></div>
<div style="left:0px;top:720px;width:563px;height:1px;background:#1b1b1b;"></div>
<div style="left:4px;top:704px;width:13px;height:13px;background:#1e1e1e;"></div>
<svg style="left:4px;top:706px" width="13" height="9" viewBox="0 0 13 9"><path d="M0.300 4.500c2.400-5.300 10-5.300 12.400 0-2.400 5.300-10 5.300-12.400 0z" fill="#b4b4b4"/><circle cx="6.500" cy="4.300" r="2.400" fill="#1e1e1e"/><circle cx="6.500" cy="4.300" r="1" fill="#b4b4b4"/></svg>
<div style="left:34px;top:703px;width:13px;height:13px;background:#1a1a1a;"></div>
<div style="left:49px;top:703px;width:13px;height:13px;background:#1a1a1a;"></div>
<svg style="left:73px;top:707px" width="8" height="9" viewBox="0 0 8 9"><path d="M0.300 0.300l7.400 4.200-7.400 4.200z" fill="#c4c4c4"/></svg>
<div style="left:85px;top:703px;width:15px;height:15px;background:#a9a8d2;"></div>
<span style="left:106px;top:703px;font-size:11px;line-height:19px;color:#a2a2a2;font-weight:bold;font-family:'DejaVu Sans','Liberation Sans',sans-serif;letter-spacing:-0.3px;">4</span>
<svg style="left:137px;top:704px" width="13" height="15" viewBox="0 0 13 15"><path d="M0.500 0.500h8.500l3.500 3.500v10.500h-12z" fill="#f2f2f2"/><path d="M9 0.500v3.500h3.500z" fill="#b5b5b5"/><rect x="2" y="2.500" width="8" height="7.500" fill="#26307e"/><path d="M4 4.500l3.500 3" stroke="#9aa3e0" stroke-width="1"/></svg>
<span style="left:157px;top:703px;font-size:12px;line-height:19px;color:#a0a0a0;font-weight:bold;">2.2</span>
<svg style="left:249px;top:704px" width="13" height="13" viewBox="0 0 13 13"><rect width="13" height="13" fill="#161616"/><path d="M1.800 6c0-5.300 9.400-5.300 9.400 0z" fill="#e0e0e0"/><rect x="5.800" y="5.500" width="1.400" height="5" fill="#e0e0e0"/><rect x="3.300" y="8" width="6.400" height="1.300" fill="#e0e0e0"/></svg>
<svg style="left:279px;top:704px" width="13" height="13" viewBox="0 0 13 13"><rect width="13" height="13" fill="#161616"/><path d="M2 11.500l9.500-10" stroke="#d8d8d8" stroke-width="1.500"/></svg>
<div style="left:324px;top:704px;width:13px;height:13px;background:#1a1a1a;"></div>
<div style="left:339px;top:704px;width:13px;height:13px;background:#1a1a1a;"></div>
<div style="left:354px;top:704px;width:13px;height:13px;background:#1a1a1a;"></div>
<div style="left:384px;top:701px;width:71px;height:19px;background:#222222;"></div>
<span style="left:392px;top:702px;font-size:11.5px;line-height:19px;color:#e2e2e2;">正常</span>
<svg style="left:441px;top:708px" width="9" height="6" viewBox="0 0 9 6"><path d="M0 0h9l-4.5 6z" fill="#dcdcdc"/></svg>
<div style="left:457px;top:701px;width:18px;height:19px;background:#333333;"></div>
<div style="left:459px;top:704px;width:13px;height:13px;background:#1a1a1a;"></div>
<div style="left:478px;top:701px;width:66px;height:19px;background:#222222;"></div>
<span style="left:485px;top:702px;font-size:11.5px;line-height:19px;color:#e2e2e2;">无</span>
<svg style="left:530px;top:708px" width="9" height="6" viewBox="0 0 9 6"><path d="M0 0h9l-4.5 6z" fill="#dcdcdc"/></svg>
<div style="left:0px;top:721px;width:563px;height:19px;background:#2e2e2e;"></div>
<div style="left:0px;top:740px;width:563px;height:1px;background:#1b1b1b;"></div>
<div style="left:4px;top:724px;width:13px;height:13px;background:#1e1e1e;"></div>
<svg style="left:4px;top:726px" width="13" height="9" viewBox="0 0 13 9"><path d="M0.300 4.500c2.400-5.300 10-5.300 12.400 0-2.400 5.300-10 5.300-12.400 0z" fill="#b4b4b4"/><circle cx="6.500" cy="4.300" r="2.400" fill="#1e1e1e"/><circle cx="6.500" cy="4.300" r="1" fill="#b4b4b4"/></svg>
<div style="left:34px;top:723px;width:13px;height:13px;background:#1a1a1a;"></div>
<div style="left:49px;top:723px;width:13px;height:13px;background:#1a1a1a;"></div>
<svg style="left:73px;top:727px" width="8" height="9" viewBox="0 0 8 9"><path d="M0.300 0.300l7.400 4.200-7.400 4.200z" fill="#c4c4c4"/></svg>
<div style="left:85px;top:723px;width:15px;height:15px;background:#a9a8d2;"></div>
<span style="left:106px;top:723px;font-size:11px;line-height:19px;color:#a2a2a2;font-weight:bold;font-family:'DejaVu Sans','Liberation Sans',sans-serif;letter-spacing:-0.3px;">5</span>
<svg style="left:137px;top:724px" width="13" height="15" viewBox="0 0 13 15"><path d="M0.500 0.500h8.500l3.500 3.500v10.500h-12z" fill="#f2f2f2"/><path d="M9 0.500v3.500h3.500z" fill="#b5b5b5"/><rect x="2" y="2.500" width="8" height="7.500" fill="#26307e"/><path d="M4 4.500l3.500 3" stroke="#9aa3e0" stroke-width="1"/></svg>
<span style="left:157px;top:723px;font-size:12px;line-height:19px;color:#a0a0a0;font-weight:bold;">home</span>
<svg style="left:249px;top:724px" width="13" height="13" viewBox="0 0 13 13"><rect width="13" height="13" fill="#161616"/><path d="M1.800 6c0-5.300 9.400-5.300 9.400 0z" fill="#e0e0e0"/><rect x="5.800" y="5.500" width="1.400" height="5" fill="#e0e0e0"/><rect x="3.300" y="8" width="6.400" height="1.300" fill="#e0e0e0"/></svg>
<svg style="left:279px;top:724px" width="13" height="13" viewBox="0 0 13 13"><rect width="13" height="13" fill="#161616"/><path d="M2 11.500l9.500-10" stroke="#d8d8d8" stroke-width="1.500"/></svg>
<div style="left:324px;top:724px;width:13px;height:13px;background:#1a1a1a;"></div>
<div style="left:339px;top:724px;width:13px;height:13px;background:#1a1a1a;"></div>
<div style="left:354px;top:724px;width:13px;height:13px;background:#1a1a1a;"></div>
<div style="left:384px;top:721px;width:71px;height:19px;background:#222222;"></div>
<span style="left:392px;top:722px;font-size:11.5px;line-height:19px;color:#e2e2e2;">正常</span>
<svg style="left:441px;top:728px" width="9" height="6" viewBox="0 0 9 6"><path d="M0 0h9l-4.5 6z" fill="#dcdcdc"/></svg>
<div style="left:457px;top:721px;width:18px;height:19px;background:#333333;"></div>
<div style="left:459px;top:724px;width:13px;height:13px;background:#1a1a1a;"></div>
<div style="left:478px;top:721px;width:66px;height:19px;background:#222222;"></div>
<span style="left:485px;top:722px;font-size:11.5px;line-height:19px;color:#e2e2e2;">无</span>
<svg style="left:530px;top:728px" width="9" height="6" viewBox="0 0 9 6"><path d="M0 0h9l-4.5 6z" fill="#dcdcdc"/></svg>
<div style="left:0px;top:741px;width:563px;height:19px;background:#2e2e2e;"></div>
<div style="left:0px;top:760px;width:563px;height:1px;background:#1b1b1b;"></div>
<div style="left:4px;top:744px;width:13px;height:13px;background:#1e1e1e;"></div>
<svg style="left:4px;top:746px" width="13" height="9" viewBox="0 0 13 9"><path d="M0.300 4.500c2.400-5.300 10-5.300 12.400 0-2.400 5.300-10 5.300-12.400 0z" fill="#b4b4b4"/><circle cx="6.500" cy="4.300" r="2.400" fill="#1e1e1e"/><circle cx="6.500" cy="4.300" r="1" fill="#b4b4b4"/></svg>
<div style="left:34px;top:743px;width:13px;height:13px;background:#1a1a1a;"></div>
<div style="left:49px;top:743px;width:13px;height:13px;background:#1a1a1a;"></div>
<svg style="left:73px;top:747px" width="8" height="9" viewBox="0 0 8 9"><path d="M0.300 0.300l7.400 4.200-7.400 4.200z" fill="#c4c4c4"/></svg>
<div style="left:85px;top:743px;width:15px;height:15px;background:#a9a8d2;"></div>
<span style="left:106px;top:743px;font-size:11px;line-height:19px;color:#a2a2a2;font-weight:bold;font-family:'DejaVu Sans','Liberation Sans',sans-serif;letter-spacing:-0.3px;">6</span>
<svg style="left:137px;top:744px" width="13" height="15" viewBox="0 0 13 15"><path d="M0.500 0.500h8.500l3.500 3.500v10.500h-12z" fill="#f2f2f2"/><path d="M9 0.500v3.500h3.500z" fill="#b5b5b5"/><rect x="2" y="2.500" width="8" height="7.500" fill="#26307e"/><path d="M4 4.500l3.500 3" stroke="#9aa3e0" stroke-width="1"/></svg>
<span style="left:157px;top:743px;font-size:12px;line-height:19px;color:#a0a0a0;font-weight:bold;">3.1</span>
<svg style="left:249px;top:744px" width="13" height="13" viewBox="0 0 13 13"><rect width="13" height="13" fill="#161616"/><path d="M1.800 6c0-5.300 9.400-5.300 9.400 0z" fill="#e0e0e0"/><rect x="5.800" y="5.500" width="1.400" height="5" fill="#e0e0e0"/><rect x="3.300" y="8" width="6.400" height="1.300" fill="#e0e0e0"/></svg>
<svg style="left:279px;top:744px" width="13" height="13" viewBox="0 0 13 13"><rect width="13" height="13" fill="#161616"/><path d="M2 11.500l9.500-10" stroke="#d8d8d8" stroke-width="1.500"/></svg>
<div style="left:324px;top:744px;width:13px;height:13px;background:#1a1a1a;"></div>
<div style="left:339px;top:744px;width:13px;height:13px;background:#1a1a1a;"></div>
<div style="left:354px;top:744px;width:13px;height:13px;background:#1a1a1a;"></div>
<div style="left:384px;top:741px;width:71px;height:19px;background:#222222;"></div>
<span style="left:392px;top:742px;font-size:11.5px;line-height:19px;color:#e2e2e2;">正常</span>
<svg style="left:441px;top:748px" width="9" height="6" viewBox="0 0 9 6"><path d="M0 0h9l-4.5 6z" fill="#dcdcdc"/></svg>
<div style="left:457px;top:741px;width:18px;height:19px;background:#333333;"></div>
<div style="left:459px;top:744px;width:13px;height:13px;background:#1a1a1a;"></div>
<div style="left:478px;top:741px;width:66px;height:19px;background:#222222;"></div>
<span style="left:485px;top:742px;font-size:11.5px;line-height:19px;color:#e2e2e2;">无</span>
<svg style="left:530px;top:748px" width="9" height="6" viewBox="0 0 9 6"><path d="M0 0h9l-4.5 6z" fill="#dcdcdc"/></svg>
<div style="left:0px;top:761px;width:563px;height:19px;background:#2e2e2e;"></div>
<div style="left:0px;top:780px;width:563px;height:1px;background:#1b1b1b;"></div>
<div style="left:4px;top:764px;width:13px;height:13px;background:#1e1e1e;"></div>
<svg style="left:4px;top:766px" width="13" height="9" viewBox="0 0 13 9"><path d="M0.300 4.500c2.400-5.300 10-5.300 12.400 0-2.400 5.300-10 5.300-12.400 0z" fill="#b4b4b4"/><circle cx="6.500" cy="4.300" r="2.400" fill="#1e1e1e"/><circle cx="6.500" cy="4.300" r="1" fill="#b4b4b4"/></svg>
<div style="left:34px;top:763px;width:13px;height:13px;background:#1a1a1a;"></div>
<div style="left:49px;top:763px;width:13px;height:13px;background:#1a1a1a;"></div>
<svg style="left:73px;top:767px" width="8" height="9" viewBox="0 0 8 9"><path d="M0.300 0.300l7.400 4.200-7.400 4.200z" fill="#c4c4c4"/></svg>
<div style="left:85px;top:763px;width:15px;height:15px;background:#a9a8d2;"></div>
<span style="left:106px;top:763px;font-size:11px;line-height:19px;color:#a2a2a2;font-weight:bold;font-family:'DejaVu Sans','Liberation Sans',sans-serif;letter-spacing:-0.3px;">7</span>
<svg style="left:137px;top:764px" width="13" height="15" viewBox="0 0 13 15"><path d="M0.500 0.500h8.500l3.500 3.500v10.500h-12z" fill="#f2f2f2"/><path d="M9 0.500v3.500h3.500z" fill="#b5b5b5"/><rect x="2" y="2.500" width="8" height="7.500" fill="#26307e"/><path d="M4 4.500l3.500 3" stroke="#9aa3e0" stroke-width="1"/></svg>
<span style="left:157px;top:763px;font-size:12px;line-height:19px;color:#a0a0a0;font-weight:bold;">3.2</span>
<svg style="left:249px;top:764px" width="13" height="13" viewBox="0 0 13 13"><rect width="13" height="13" fill="#161616"/><path d="M1.800 6c0-5.300 9.400-5.300 9.400 0z" fill="#e0e0e0"/><rect x="5.800" y="5.500" width="1.400" height="5" fill="#e0e0e0"/><rect x="3.300" y="8" width="6.400" height="1.300" fill="#e0e0e0"/></svg>
<svg style="left:279px;top:764px" width="13" height="13" viewBox="0 0 13 13"><rect width="13" height="13" fill="#161616"/><path d="M2 11.500l9.500-10" stroke="#d8d8d8" stroke-width="1.500"/></svg>
<div style="left:324px;top:764px;width:13px;height:13px;background:#1a1a1a;"></div>
<div style="left:339px;top:764px;width:13px;height:13px;background:#1a1a1a;"></div>
<div style="left:354px;top:764px;width:13px;height:13px;background:#1a1a1a;"></div>
<div style="left:384px;top:761px;width:71px;height:19px;background:#222222;"></div>
<span style="left:392px;top:762px;font-size:11.5px;line-height:19px;color:#e2e2e2;">正常</span>
<svg style="left:441px;top:768px" width="9" height="6" viewBox="0 0 9 6"><path d="M0 0h9l-4.5 6z" fill="#dcdcdc"/></svg>
<div style="left:457px;top:761px;width:18px;height:19px;background:#333333;"></div>
<div style="left:459px;top:764px;width:13px;height:13px;background:#1a1a1a;"></div>
<div style="left:478px;top:761px;width:66px;height:19px;background:#222222;"></div>
<span style="left:485px;top:762px;font-size:11.5px;line-height:19px;color:#e2e2e2;">无</span>
<svg style="left:530px;top:768px" width="9" height="6" viewBox="0 0 9 6"><path d="M0 0h9l-4.5 6z" fill="#dcdcdc"/></svg>
<div style="left:0px;top:781px;width:563px;height:19px;background:#2e2e2e;"></div>
<div style="left:0px;top:800px;width:563px;height:1px;background:#1b1b1b;"></div>
<div style="left:4px;top:784px;width:13px;height:13px;background:#1e1e1e;"></div>
<svg style="left:4px;top:786px" width="13" height="9" viewBox="0 0 13 9"><path d="M0.300 4.500c2.400-5.300 10-5.300 12.400 0-2.400 5.300-10 5.300-12.400 0z" fill="#b4b4b4"/><circle cx="6.500" cy="4.300" r="2.400" fill="#1e1e1e"/><circle cx="6.500" cy="4.300" r="1" fill="#b4b4b4"/></svg>
<div style="left:34px;top:783px;width:13px;height:13px;background:#1a1a1a;"></div>
<div style="left:49px;top:783px;width:13px;height:13px;background:#1a1a1a;"></div>
<svg style="left:73px;top:787px" width="8" height="9" viewBox="0 0 8 9"><path d="M0.300 0.300l7.400 4.200-7.400 4.200z" fill="#c4c4c4"/></svg>
<div style="left:85px;top:783px;width:15px;height:15px;background:#a9a8d2;"></div>
<span style="left:106px;top:783px;font-size:11px;line-height:19px;color:#a2a2a2;font-weight:bold;font-family:'DejaVu Sans','Liberation Sans',sans-serif;letter-spacing:-0.3px;">8</span>
<svg style="left:137px;top:784px" width="13" height="15" viewBox="0 0 13 15"><path d="M0.500 0.500h8.500l3.500 3.500v10.500h-12z" fill="#f2f2f2"/><path d="M9 0.500v3.500h3.500z" fill="#b5b5b5"/><rect x="2" y="2.500" width="8" height="7.500" fill="#26307e"/><path d="M4 4.500l3.500 3" stroke="#9aa3e0" stroke-width="1"/></svg>
<span style="left:157px;top:783px;font-size:12px;line-height:19px;color:#a0a0a0;font-weight:bold;">message</span>
<svg style="left:249px;top:784px" width="13" height="13" viewBox="0 0 13 13"><rect width="13" height="13" fill="#161616"/><path d="M1.800 6c0-5.300 9.400-5.300 9.400 0z" fill="#e0e0e0"/><rect x="5.800" y="5.500" width="1.400" height="5" fill="#e0e0e0"/><rect x="3.300" y="8" width="6.400" height="1.300" fill="#e0e0e0"/></svg>
<svg style="left:279px;top:784px" width="13" height="13" viewBox="0 0 13 13"><rect width="13" height="13" fill="#161616"/><path d="M2 11.500l9.500-10" stroke="#d8d8d8" stroke-width="1.500"/></svg>
<div style="left:324px;top:784px;width:13px;height:13px;background:#1a1a1a;"></div>
<div style="left:339px;top:784px;width:13px;height:13px;background:#1a1a1a;"></div>
<div style="left:354px;top:784px;width:13px;height:13px;background:#1a1a1a;"></div>
<div style="left:384px;top:781px;width:71px;height:19px;background:#222222;"></div>
<span style="left:392px;top:782px;font-size:11.5px;line-height:19px;color:#e2e2e2;">正常</span>
<svg style="left:441px;top:788px" width="9" height="6" viewBox="0 0 9 6"><path d="M0 0h9l-4.5 6z" fill="#dcdcdc"/></svg>
<div style="left:457px;top:781px;width:18px;height:19px;background:#333333;"></div>
<div style="left:459px;top:784px;width:13px;height:13px;background:#1a1a1a;"></div>
<div style="left:478px;top:781px;width:66px;height:19px;background:#222222;"></div>
<span style="left:485px;top:782px;font-size:11.5px;line-height:19px;color:#e2e2e2;">无</span>
<svg style="left:530px;top:788px" width="9" height="6" viewBox="0 0 9 6"><path d="M0 0h9l-4.5 6z" fill="#dcdcdc"/></svg>
<div style="left:0px;top:801px;width:563px;height:19px;background:#2e2e2e;"></div>
<div style="left:0px;top:820px;width:563px;height:1px;background:#1b1b1b;"></div>
<div style="left:4px;top:804px;width:13px;height:13px;background:#1e1e1e;"></div>
<svg style="left:4px;top:806px" width="13" height="9" viewBox="0 0 13 9"><path d="M0.300 4.500c2.400-5.300 10-5.300 12.400 0-2.400 5.300-10 5.300-12.400 0z" fill="#b4b4b4"/><circle cx="6.500" cy="4.300" r="2.400" fill="#1e1e1e"/><circle cx="6.500" cy="4.300" r="1" fill="#b4b4b4"/></svg>
<div style="left:34px;top:803px;width:13px;height:13px;background:#1a1a1a;"></div>
<div style="left:49px;top:803px;width:13px;height:13px;background:#1a1a1a;"></div>
<svg style="left:73px;top:807px" width="8" height="9" viewBox="0 0 8 9"><path d="M0.300 0.300l7.400 4.200-7.400 4.200z" fill="#c4c4c4"/></svg>
<div style="left:85px;top:803px;width:15px;height:15px;background:#a9a8d2;"></div>
<span style="left:106px;top:803px;font-size:11px;line-height:19px;color:#a2a2a2;font-weight:bold;font-family:'DejaVu Sans','Liberation Sans',sans-serif;letter-spacing:-0.3px;">9</span>
<svg style="left:137px;top:804px" width="13" height="15" viewBox="0 0 13 15"><path d="M0.500 0.500h8.500l3.500 3.500v10.500h-12z" fill="#f2f2f2"/><path d="M9 0.500v3.500h3.500z" fill="#b5b5b5"/><rect x="2" y="2.500" width="8" height="7.500" fill="#26307e"/><path d="M4 4.500l3.500 3" stroke="#9aa3e0" stroke-width="1"/></svg>
<span style="left:157px;top:803px;font-size:12px;line-height:19px;color:#a0a0a0;font-weight:bold;">4.1</span>
<svg style="left:249px;top:804px" width="13" height="13" viewBox="0 0 13 13"><rect width="13" height="13" fill="#161616"/><path d="M1.800 6c0-5.300 9.400-5.300 9.400 0z" fill="#e0e0e0"/><rect x="5.800" y="5.500" width="1.400" height="5" fill="#e0e0e0"/><rect x="3.300" y="8" width="6.400" height="1.300" fill="#e0e0e0"/></svg>
<svg style="left:279px;top:804px" width="13" height="13" viewBox="0 0 13 13"><rect width="13" height="13" fill="#161616"/><path d="M2 11.500l9.500-10" stroke="#d8d8d8" stroke-width="1.500"/></svg>
<div style="left:324px;top:804px;width:13px;height:13px;background:#1a1a1a;"></div>
<div style="left:339px;top:804px;width:13px;height:13px;background:#1a1a1a;"></div>
<div style="left:354px;top:804px;width:13px;height:13px;background:#1a1a1a;"></div>
<div style="left:384px;top:801px;width:71px;height:19px;background:#222222;"></div>
<span style="left:392px;top:802px;font-size:11.5px;line-height:19px;color:#e2e2e2;">正常</span>
<svg style="left:441px;top:808px" width="9" height="6" viewBox="0 0 9 6"><path d="M0 0h9l-4.5 6z" fill="#dcdcdc"/></svg>
<div style="left:457px;top:801px;width:18px;height:19px;background:#333333;"></div>
<div style="left:459px;top:804px;width:13px;height:13px;background:#1a1a1a;"></div>
<div style="left:478px;top:801px;width:66px;height:19px;background:#222222;"></div>
<span style="left:485px;top:802px;font-size:11.5px;line-height:19px;color:#e2e2e2;">无</span>
<svg style="left:530px;top:808px" width="9" height="6" viewBox="0 0 9 6"><path d="M0 0h9l-4.5 6z" fill="#dcdcdc"/></svg>
<div style="left:0px;top:821px;width:563px;height:19px;background:#2e2e2e;"></div>
<div style="left:0px;top:840px;width:563px;height:1px;background:#1b1b1b;"></div>
<div style="left:4px;top:824px;width:13px;height:13px;background:#1e1e1e;"></div>
<svg style="left:4px;top:826px" width="13" height="9" viewBox="0 0 13 9"><path d="M0.300 4.500c2.400-5.300 10-5.300 12.400 0-2.400 5.300-10 5.300-12.400 0z" fill="#b4b4b4"/><circle cx="6.500" cy="4.300" r="2.400" fill="#1e1e1e"/><circle cx="6.500" cy="4.300" r="1" fill="#b4b4b4"/></svg>
<div style="left:34px;top:823px;width:13px;height:13px;background:#1a1a1a;"></div>
<div style="left:49px;top:823px;width:13px;height:13px;background:#1a1a1a;"></div>
<svg style="left:73px;top:827px" width="8" height="9" viewBox="0 0 8 9"><path d="M0.300 0.300l7.400 4.200-7.400 4.200z" fill="#c4c4c4"/></svg>
<div style="left:85px;top:823px;width:15px;height:15px;background:#a9a8d2;"></div>
<span style="left:106px;top:823px;font-size:11px;line-height:19px;color:#a2a2a2;font-weight:bold;font-family:'DejaVu Sans','Liberation Sans',sans-serif;letter-spacing:-0.3px;">10</span>
<svg style="left:137px;top:824px" width="13" height="15" viewBox="0 0 13 15"><path d="M0.500 0.500h8.500l3.500 3.500v10.500h-12z" fill="#f2f2f2"/><path d="M9 0.500v3.500h3.500z" fill="#b5b5b5"/><rect x="2" y="2.500" width="8" height="7.500" fill="#26307e"/><path d="M4 4.500l3.500 3" stroke="#9aa3e0" stroke-width="1"/></svg>
<span style="left:157px;top:823px;font-size:12px;line-height:19px;color:#a0a0a0;font-weight:bold;">4.2</span>
<svg style="left:249px;top:824px" width="13" height="13" viewBox="0 0 13 13"><rect width="13" height="13" fill="#161616"/><path d="M1.800 6c0-5.300 9.400-5.300 9.400 0z" fill="#e0e0e0"/><rect x="5.800" y="5.500" width="1.400" height="5" fill="#e0e0e0"/><rect x="3.300" y="8" width="6.400" height="1.300" fill="#e0e0e0"/></svg>
<svg style="left:279px;top:824px" width="13" height="13" viewBox="0 0 13 13"><rect width="13" height="13" fill="#161616"/><path d="M2 11.500l9.500-10" stroke="#d8d8d8" stroke-width="1.500"/></svg>
<div style="left:324px;top:824px;width:13px;height:13px;background:#1a1a1a;"></div>
<div style="left:339px;top:824px;width:13px;height:13px;background:#1a1a1a;"></div>
<div style="left:354px;top:824px;width:13px;height:13px;background:#1a1a1a;"></div>
<div style="left:384px;top:821px;width:71px;height:19px;background:#222222;"></div>
<span style="left:392px;top:822px;font-size:11.5px;line-height:19px;color:#e2e2e2;">正常</span>
<svg style="left:441px;top:828px" width="9" height="6" viewBox="0 0 9 6"><path d="M0 0h9l-4.5 6z" fill="#dcdcdc"/></svg>
<div style="left:457px;top:821px;width:18px;height:19px;background:#333333;"></div>
<div style="left:459px;top:824px;width:13px;height:13px;background:#1a1a1a;"></div>
<div style="left:478px;top:821px;width:66px;height:19px;background:#222222;"></div>
<span style="left:485px;top:822px;font-size:11.5px;line-height:19px;color:#e2e2e2;">无</span>
<svg style="left:530px;top:828px" width="9" height="6" viewBox="0 0 9 6"><path d="M0 0h9l-4.5 6z" fill="#dcdcdc"/></svg>
<div style="left:0px;top:841px;width:563px;height:19px;background:#2e2e2e;"></div>
<div style="left:0px;top:860px;width:563px;height:1px;background:#1b1b1b;"></div>
<div style="left:4px;top:844px;width:13px;height:13px;background:#1e1e1e;"></div>
<svg style="left:4px;top:846px" width="13" height="9" viewBox="0 0 13 9"><path d="M0.300 4.500c2.400-5.300 10-5.300 12.400 0-2.400 5.300-10 5.300-12.400 0z" fill="#b4b4b4"/><circle cx="6.500" cy="4.300" r="2.400" fill="#1e1e1e"/><circle cx="6.500" cy="4.300" r="1" fill="#b4b4b4"/></svg>
<div style="left:34px;top:843px;width:13px;height:13px;background:#1a1a1a;"></div>
<div style="left:49px;top:843px;width:13px;height:13px;background:#1a1a1a;"></div>
<svg style="left:73px;top:847px" width="8" height="9" viewBox="0 0 8 9"><path d="M0.300 0.300l7.400 4.200-7.400 4.200z" fill="#c4c4c4"/></svg>
<div style="left:85px;top:843px;width:15px;height:15px;background:#a9a8d2;"></div>
<span style="left:106px;top:843px;font-size:11px;line-height:19px;color:#a2a2a2;font-weight:bold;font-family:'DejaVu Sans','Liberation Sans',sans-serif;letter-spacing:-0.3px;">11</span>
<svg style="left:137px;top:844px" width="13" height="15" viewBox="0 0 13 15"><path d="M0.500 0.500h8.500l3.500 3.500v10.500h-12z" fill="#f2f2f2"/><path d="M9 0.500v3.500h3.500z" fill="#b5b5b5"/><rect x="2" y="2.500" width="8" height="7.500" fill="#26307e"/><path d="M4 4.500l3.500 3" stroke="#9aa3e0" stroke-width="1"/></svg>
<span style="left:157px;top:843px;font-size:12px;line-height:19px;color:#a0a0a0;font-weight:bold;"><b style="color:#dedede">椭圆</b> 3 <b style="color:#dedede">副本</b></span>
<svg style="left:249px;top:844px" width="13" height="13" viewBox="0 0 13 13"><rect width="13" height="13" fill="#161616"/><path d="M1.800 6c0-5.300 9.400-5.300 9.400 0z" fill="#e0e0e0"/><rect x="5.800" y="5.500" width="1.400" height="5" fill="#e0e0e0"/><rect x="3.300" y="8" width="6.400" height="1.300" fill="#e0e0e0"/></svg>
<svg style="left:279px;top:844px" width="13" height="13" viewBox="0 0 13 13"><rect width="13" height="13" fill="#161616"/><path d="M2 11.500l9.500-10" stroke="#d8d8d8" stroke-width="1.500"/></svg>
<div style="left:324px;top:844px;width:13px;height:13px;background:#1a1a1a;"></div>
<div style="left:339px;top:844px;width:13px;height:13px;background:#1a1a1a;"></div>
<div style="left:354px;top:844px;width:13px;height:13px;background:#1a1a1a;"></div>
<div style="left:384px;top:841px;width:71px;height:19px;background:#222222;"></div>
<span style="left:392px;top:842px;font-size:11.5px;line-height:19px;color:#e2e2e2;">正常</span>
<svg style="left:441px;top:848px" width="9" height="6" viewBox="0 0 9 6"><path d="M0 0h9l-4.5 6z" fill="#dcdcdc"/></svg>
<div style="left:457px;top:841px;width:18px;height:19px;background:#333333;"></div>
<div style="left:459px;top:844px;width:13px;height:13px;background:#1a1a1a;"></div>
<div style="left:478px;top:841px;width:66px;height:19px;background:#222222;"></div>
<span style="left:485px;top:842px;font-size:11.5px;line-height:19px;color:#e2e2e2;">无</span>
<svg style="left:530px;top:848px" width="9" height="6" viewBox="0 0 9 6"><path d="M0 0h9l-4.5 6z" fill="#dcdcdc"/></svg>
<div style="left:0px;top:861px;width:563px;height:19px;background:#3e3e3e;"></div>
<div style="left:0px;top:880px;width:563px;height:1px;background:#1b1b1b;"></div>
<div style="left:4px;top:864px;width:13px;height:13px;background:#1e1e1e;"></div>
<svg style="left:4px;top:866px" width="13" height="9" viewBox="0 0 13 9"><path d="M0.300 4.500c2.400-5.300 10-5.300 12.400 0-2.400 5.300-10 5.300-12.400 0z" fill="#b4b4b4"/><circle cx="6.500" cy="4.300" r="2.400" fill="#1e1e1e"/><circle cx="6.500" cy="4.300" r="1" fill="#b4b4b4"/></svg>
<div style="left:34px;top:863px;width:13px;height:13px;background:#1a1a1a;"></div>
<div style="left:49px;top:863px;width:13px;height:13px;background:#1a1a1a;"></div>
<svg style="left:73px;top:867px" width="8" height="9" viewBox="0 0 8 9"><path d="M0.300 0.300l7.400 4.200-7.400 4.200z" fill="#c4c4c4"/></svg>
<div style="left:85px;top:863px;width:15px;height:15px;background:#a9a8d2;"></div>
<span style="left:106px;top:863px;font-size:11px;line-height:19px;color:#a2a2a2;font-weight:bold;font-family:'DejaVu Sans','Liberation Sans',sans-serif;letter-spacing:-0.3px;">12</span>
<svg style="left:137px;top:864px" width="13" height="15" viewBox="0 0 13 15"><path d="M0.500 0.500h8.500l3.500 3.500v10.500h-12z" fill="#f2f2f2"/><path d="M9 0.500v3.500h3.500z" fill="#b5b5b5"/><rect x="2" y="2.500" width="8" height="7.500" fill="#26307e"/><path d="M4 4.500l3.500 3" stroke="#9aa3e0" stroke-width="1"/></svg>
<div style="left:154px;top:861px;width:90px;height:19px;background:#a2a2a2;"></div>
<span style="left:157px;top:863px;font-size:12px;line-height:19px;color:#0c0c0c;font-weight:bold;">我的</span>
<svg style="left:249px;top:864px" width="13" height="13" viewBox="0 0 13 13"><rect width="13" height="13" fill="#161616"/><path d="M1.800 6c0-5.300 9.400-5.300 9.400 0z" fill="#e0e0e0"/><rect x="5.800" y="5.500" width="1.400" height="5" fill="#e0e0e0"/><rect x="3.300" y="8" width="6.400" height="1.300" fill="#e0e0e0"/></svg>
<svg style="left:279px;top:864px" width="13" height="13" viewBox="0 0 13 13"><rect width="13" height="13" fill="#161616"/><path d="M2 11.500l9.500-10" stroke="#d8d8d8" stroke-width="1.500"/></svg>
<div style="left:324px;top:864px;width:13px;height:13px;background:#1a1a1a;"></div>
<div style="left:339px;top:864px;width:13px;height:13px;background:#1a1a1a;"></div>
<div style="left:354px;top:864px;width:13px;height:13px;background:#1a1a1a;"></div>
<div style="left:384px;top:861px;width:71px;height:19px;background:#222222;"></div>
<span style="left:392px;top:862px;font-size:11.5px;line-height:19px;color:#e2e2e2;">正常</span>
<svg style="left:441px;top:868px" width="9" height="6" viewBox="0 0 9 6"><path d="M0 0h9l-4.5 6z" fill="#dcdcdc"/></svg>
<div style="left:457px;top:861px;width:18px;height:19px;background:#333333;"></div>
<div style="left:459px;top:864px;width:13px;height:13px;background:#1a1a1a;"></div>
<div style="left:478px;top:861px;width:66px;height:19px;background:#222222;"></div>
<span style="left:485px;top:862px;font-size:11.5px;line-height:19px;color:#e2e2e2;">无</span>
<svg style="left:530px;top:868px" width="9" height="6" viewBox="0 0 9 6"><path d="M0 0h9l-4.5 6z" fill="#dcdcdc"/></svg>
<div style="left:563px;top:520px;width:1px;height:361px;background:#080808;"></div>
<div style="left:564px;top:520px;width:1px;height:361px;background:#1c1c1c;"></div>
<div style="left:565px;top:460px;width:465px;height:31px;background:#232323;"></div>
<div style="left:565px;top:491px;width:465px;height:1px;background:#111;"></div>
<div style="left:570px;top:492px;width:460px;height:8px;background:#6d6d6d;"></div>
<div style="left:565px;top:492px;width:5px;height:8px;background:#35b2ea;border-radius:3px 0 0 3px;"></div>
<div style="left:567px;top:494px;width:2px;height:5px;background:#c8ecfb;"></div>
<div style="left:655px;top:492px;width:3px;height:8px;background:#7e9bb8;"></div>
<div style="left:565px;top:500px;width:465px;height:1px;background:#111;"></div>
<div style="left:565px;top:501px;width:465px;height:19px;background:#262626;"></div>
<div style="left:565px;top:520px;width:465px;height:1px;background:#0c0c0c;"></div>
<div style="left:565px;top:500px;width:30px;height:20px;overflow:hidden;background:none"><span style="left:-4px;top:1px;font-size:10px;line-height:15px;color:#c6c6c6;letter-spacing:0.1px;">0:00f</span></div>
<span style="left:620px;top:501px;font-size:10px;line-height:15px;color:#c6c6c6;letter-spacing:-0.1px;">10f</span>
<span style="left:677px;top:501px;font-size:10px;line-height:15px;color:#c6c6c6;letter-spacing:-0.1px;">20f</span>
<span style="left:734px;top:501px;font-size:10px;line-height:15px;color:#c6c6c6;letter-spacing:-0.1px;">01f</span>
<span style="left:791px;top:501px;font-size:10px;line-height:15px;color:#c6c6c6;letter-spacing:-0.1px;">11f</span>
<span style="left:848px;top:501px;font-size:10px;line-height:15px;color:#c6c6c6;letter-spacing:-0.1px;">21f</span>
<span style="left:905px;top:501px;font-size:10px;line-height:15px;color:#c6c6c6;letter-spacing:-0.1px;">02f</span>
<span style="left:962px;top:501px;font-size:10px;line-height:15px;color:#c6c6c6;letter-spacing:-0.1px;">12f</span>
<span style="left:1019px;top:501px;font-size:10px;line-height:15px;color:#c6c6c6;letter-spacing:-0.1px;">22f</span>
<div style="left:571px;top:515px;width:1px;height:5px;background:#9a9a9a;"></div>
<div style="left:628px;top:515px;width:1px;height:5px;background:#9a9a9a;"></div>
<div style="left:685px;top:515px;width:1px;height:5px;background:#9a9a9a;"></div>
<div style="left:742px;top:515px;width:1px;height:5px;background:#9a9a9a;"></div>
<div style="left:799px;top:515px;width:1px;height:5px;background:#9a9a9a;"></div>
<div style="left:856px;top:515px;width:1px;height:5px;background:#9a9a9a;"></div>
<div style="left:913px;top:515px;width:1px;height:5px;background:#9a9a9a;"></div>
<div style="left:970px;top:515px;width:1px;height:5px;background:#9a9a9a;"></div>
<div style="left:1027px;top:515px;width:1px;height:5px;background:#9a9a9a;"></div>
<div style="left:570px;top:521px;width:460px;height:15px;background:#6a6a6a;"></div>
<div style="left:565px;top:522px;width:6px;height:14px;background:#35b2ea;border-radius:3px 0 0 3px;"></div>
<div style="left:567px;top:524px;width:2px;height:10px;background:#1d5f85;"></div>
<div style="left:565px;top:536px;width:465px;height:1px;background:#1a1a1a;"></div>
<div style="left:565px;top:537px;width:465px;height:3px;background:#161616;"></div>
<div style="left:571px;top:537px;width:86px;height:3px;background:#22c02e;"></div>
<div style="left:657px;top:537px;width:11px;height:3px;background:#3fcf4a;"></div>
<div style="left:679px;top:537px;width:6px;height:3px;background:#3fcf4a;"></div>
<div style="left:691px;top:537px;width:339px;height:3px;background:#22c02e;"></div>
<div style="left:565px;top:541px;width:6px;height:19px;background:#303030;"></div>
<div style="left:571px;top:541px;width:459px;height:19px;background:#3c3c3c;"></div>
<div style="left:565px;top:560px;width:465px;height:1px;background:#2a2a2a;"></div>
<div style="left:657px;top:542px;width:373px;height:17px;background:linear-gradient(#7c7d90 0,#767789 15%,#747587 85%,#5d5e6e 100%);"></div>
<div style="left:565px;top:561px;width:6px;height:19px;background:#303030;"></div>
<div style="left:571px;top:561px;width:459px;height:19px;background:#3c3c3c;"></div>
<div style="left:565px;top:580px;width:465px;height:1px;background:#2a2a2a;"></div>
<div style="left:565px;top:581px;width:6px;height:19px;background:#303030;"></div>
<div style="left:571px;top:581px;width:459px;height:19px;background:#3c3c3c;"></div>
<div style="left:565px;top:600px;width:465px;height:1px;background:#2a2a2a;"></div>
<div style="left:565px;top:601px;width:6px;height:19px;background:#303030;"></div>
<div style="left:571px;top:601px;width:459px;height:19px;background:#3c3c3c;"></div>
<div style="left:565px;top:620px;width:465px;height:1px;background:#2a2a2a;"></div>
<div style="left:565px;top:621px;width:6px;height:19px;background:#303030;"></div>
<div style="left:571px;top:621px;width:459px;height:19px;background:#3c3c3c;"></div>
<div style="left:565px;top:640px;width:465px;height:1px;background:#2a2a2a;"></div>
<div style="left:657px;top:622px;width:373px;height:17px;background:linear-gradient(#7c7d90 0,#767789 15%,#747587 85%,#5d5e6e 100%);"></div>
<div style="left:565px;top:641px;width:6px;height:19px;background:#303030;"></div>
<div style="left:571px;top:641px;width:459px;height:19px;background:#3c3c3c;"></div>
<div style="left:565px;top:660px;width:465px;height:1px;background:#2a2a2a;"></div>
<div style="left:565px;top:661px;width:6px;height:19px;background:#303030;"></div>
<div style="left:571px;top:661px;width:459px;height:19px;background:#3c3c3c;"></div>
<div style="left:565px;top:680px;width:465px;height:1px;background:#2a2a2a;"></div>
<div style="left:565px;top:681px;width:6px;height:19px;background:#303030;"></div>
<div style="left:571px;top:681px;width:459px;height:19px;background:#3c3c3c;"></div>
<div style="left:565px;top:700px;width:465px;height:1px;background:#2a2a2a;"></div>
<div style="left:657px;top:682px;width:373px;height:17px;background:linear-gradient(#7c7d90 0,#767789 15%,#747587 85%,#5d5e6e 100%);"></div>
<div style="left:565px;top:701px;width:6px;height:19px;background:#303030;"></div>
<div style="left:571px;top:701px;width:459px;height:19px;background:#3c3c3c;"></div>
<div style="left:565px;top:720px;width:465px;height:1px;background:#2a2a2a;"></div>
<div style="left:657px;top:702px;width:373px;height:17px;background:linear-gradient(#7c7d90 0,#767789 15%,#747587 85%,#5d5e6e 100%);"></div>
<div style="left:565px;top:721px;width:6px;height:19px;background:#303030;"></div>
<div style="left:571px;top:721px;width:459px;height:19px;background:#3c3c3c;"></div>
<div style="left:565px;top:740px;width:465px;height:1px;background:#2a2a2a;"></div>
<div style="left:657px;top:722px;width:373px;height:17px;background:linear-gradient(#7c7d90 0,#767789 15%,#747587 85%,#5d5e6e 100%);"></div>
<div style="left:565px;top:741px;width:6px;height:19px;background:#303030;"></div>
<div style="left:571px;top:741px;width:459px;height:19px;background:#3c3c3c;"></div>
<div style="left:565px;top:760px;width:465px;height:1px;background:#2a2a2a;"></div>
<div style="left:657px;top:742px;width:373px;height:17px;background:linear-gradient(#7c7d90 0,#767789 15%,#747587 85%,#5d5e6e 100%);"></div>
<div style="left:565px;top:761px;width:6px;height:19px;background:#303030;"></div>
<div style="left:571px;top:761px;width:459px;height:19px;background:#3c3c3c;"></div>
<div style="left:565px;top:780px;width:465px;height:1px;background:#2a2a2a;"></div>
<div style="left:657px;top:762px;width:373px;height:17px;background:linear-gradient(#7c7d90 0,#767789 15%,#747587 85%,#5d5e6e 100%);"></div>
<div style="left:565px;top:781px;width:6px;height:19px;background:#303030;"></div>
<div style="left:571px;top:781px;width:459px;height:19px;background:#3c3c3c;"></div>
<div style="left:565px;top:800px;width:465px;height:1px;background:#2a2a2a;"></div>
<div style="left:657px;top:782px;width:373px;height:17px;background:linear-gradient(#7c7d90 0,#767789 15%,#747587 85%,#5d5e6e 100%);"></div>
<div style="left:565px;top:801px;width:6px;height:19px;background:#303030;"></div>
<div style="left:571px;top:801px;width:459px;height:19px;background:#3c3c3c;"></div>
<div style="left:565px;top:820px;width:465px;height:1px;background:#2a2a2a;"></div>
<div style="left:657px;top:802px;width:373px;height:17px;background:linear-gradient(#7c7d90 0,#767789 15%,#747587 85%,#5d5e6e 100%);"></div>
<div style="left:565px;top:821px;width:6px;height:19px;background:#303030;"></div>
<div style="left:571px;top:821px;width:459px;height:19px;background:#3c3c3c;"></div>
<div style="left:565px;top:840px;width:465px;height:1px;background:#2a2a2a;"></div>
<div style="left:657px;top:822px;width:373px;height:17px;background:linear-gradient(#7c7d90 0,#767789 15%,#747587 85%,#5d5e6e 100%);"></div>
<div style="left:565px;top:841px;width:6px;height:19px;background:#303030;"></div>
<div style="left:571px;top:841px;width:459px;height:19px;background:#3c3c3c;"></div>
<div style="left:565px;top:860px;width:465px;height:1px;background:#2a2a2a;"></div>
<div style="left:657px;top:842px;width:373px;height:17px;background:linear-gradient(#7c7d90 0,#767789 15%,#747587 85%,#5d5e6e 100%);"></div>
<div style="left:565px;top:861px;width:6px;height:19px;background:#535353;"></div>
<div style="left:571px;top:861px;width:459px;height:19px;background:#535353;"></div>
<div style="left:565px;top:880px;width:465px;height:1px;background:#2a2a2a;"></div>
<div style="left:571px;top:863px;width:96px;height:16px;background:#9c9ac6;border:1px solid #b9b7dc;border-bottom-color:#7b79a6;border-right-color:#7b79a6;"></div>
<svg style="left:651.5px;top:564.5px" width="10" height="10" viewBox="0 0 10 10"><path d="M5 0.200l4.800 4.800-4.800 4.800-4.800-4.800z" fill="#cdcdcd" stroke="#2c2c2c" stroke-width="0.500"/><path d="M5 0.300l4.700 4.700-4.700 4.700z" fill="#8f8f8f"/></svg>
<svg style="left:680px;top:564.5px" width="10" height="10" viewBox="0 0 10 10"><path d="M5 0.200l4.800 4.800-4.800 4.800-4.800-4.800z" fill="#cdcdcd" stroke="#2c2c2c" stroke-width="0.500"/></svg>
<svg style="left:697px;top:564.5px" width="10" height="10" viewBox="0 0 10 10"><path d="M5 0.200l4.800 4.800-4.800 4.800-4.800-4.800z" fill="#cdcdcd" stroke="#2c2c2c" stroke-width="0.500"/><path d="M5 0.300l4.700 4.700-4.700 4.700z" fill="#8f8f8f"/></svg>
<svg style="left:674px;top:584.5px" width="10" height="10" viewBox="0 0 10 10"><path d="M5 0.200l4.800 4.800-4.800 4.800-4.800-4.800z" fill="#cdcdcd" stroke="#2c2c2c" stroke-width="0.500"/><path d="M5 0.300l4.700 4.700-4.700 4.700z" fill="#8f8f8f"/></svg>
<svg style="left:680px;top:584.5px" width="10" height="10" viewBox="0 0 10 10"><path d="M5 0.200l4.800 4.800-4.800 4.800-4.800-4.800z" fill="#cdcdcd" stroke="#2c2c2c" stroke-width="0.500"/></svg>
<svg style="left:686.5px;top:584.5px" width="10" height="10" viewBox="0 0 10 10"><path d="M5 0.200l4.800 4.800-4.800 4.800-4.800-4.800z" fill="#cdcdcd" stroke="#2c2c2c" stroke-width="0.500"/></svg>
<svg style="left:697px;top:584.5px" width="10" height="10" viewBox="0 0 10 10"><path d="M5 0.200l4.800 4.800-4.800 4.800-4.800-4.800z" fill="#cdcdcd" stroke="#2c2c2c" stroke-width="0.500"/><path d="M5 0.300l4.700 4.700-4.700 4.700z" fill="#8f8f8f"/></svg>
<svg style="left:651.5px;top:604.5px" width="10" height="10" viewBox="0 0 10 10"><path d="M5 0.200l4.800 4.800-4.800 4.800-4.800-4.800z" fill="#cdcdcd" stroke="#2c2c2c" stroke-width="0.500"/><path d="M5 0.300l4.700 4.700-4.700 4.700z" fill="#8f8f8f"/></svg>
<svg style="left:674px;top:604.5px" width="10" height="10" viewBox="0 0 10 10"><path d="M5 0.200l4.800 4.800-4.800 4.800-4.800-4.800z" fill="#cdcdcd" stroke="#2c2c2c" stroke-width="0.500"/><path d="M5 0.300l4.700 4.700-4.700 4.700z" fill="#8f8f8f"/></svg>
<svg style="left:691.5px;top:644.5px" width="10" height="10" viewBox="0 0 10 10"><path d="M5 0.200l4.800 4.800-4.800 4.800-4.800-4.800z" fill="#cdcdcd" stroke="#2c2c2c" stroke-width="0.500"/><path d="M5 0.300l4.700 4.700-4.700 4.700z" fill="#8f8f8f"/></svg>
<svg style="left:697.5px;top:644.5px" width="10" height="10" viewBox="0 0 10 10"><path d="M5 0.200l4.800 4.800-4.800 4.800-4.800-4.800z" fill="#cdcdcd" stroke="#2c2c2c" stroke-width="0.500"/></svg>
<svg style="left:703px;top:644.5px" width="10" height="10" viewBox="0 0 10 10"><path d="M5 0.200l4.800 4.800-4.800 4.800-4.800-4.800z" fill="#cdcdcd" stroke="#2c2c2c" stroke-width="0.500"/></svg>
<svg style="left:708.5px;top:644.5px" width="10" height="10" viewBox="0 0 10 10"><path d="M5 0.200l4.800 4.800-4.800 4.800-4.800-4.800z" fill="#cdcdcd" stroke="#2c2c2c" stroke-width="0.500"/><path d="M5 0.300l4.700 4.700-4.700 4.700z" fill="#8f8f8f"/></svg>
<svg style="left:691.5px;top:664.5px" width="10" height="10" viewBox="0 0 10 10"><path d="M5 0.200l4.800 4.800-4.800 4.800-4.800-4.800z" fill="#cdcdcd" stroke="#2c2c2c" stroke-width="0.500"/><path d="M5 0.300l4.700 4.700-4.700 4.700z" fill="#8f8f8f"/></svg>
<svg style="left:708.5px;top:664.5px" width="10" height="10" viewBox="0 0 10 10"><path d="M5 0.200l4.800 4.800-4.800 4.800-4.800-4.800z" fill="#cdcdcd" stroke="#2c2c2c" stroke-width="0.500"/><path d="M5 0.300l4.700 4.700-4.700 4.700z" fill="#8f8f8f"/></svg>
<div style="left:656px;top:518px;width:1px;height:363px;background:#4e9ad0;"></div>
<svg style="left:650px;top:505px" width="13" height="15" viewBox="0 0 13 15"><path d="M1 0.800h11v6.700l-4.800 6.300h-1.400l-4.800-6.300z" fill="#45b4f0" stroke="#0e2333" stroke-width="1"/><path d="M4.700 2.800v2.200M6.500 2.800v2.200M8.300 2.800v2.200" stroke="#1b6aa0" stroke-width="0.900"/><path d="M5 7.500h3M6.500 7.500v7" stroke="#0a0f14" stroke-width="1"/></svg>
</body></html>
